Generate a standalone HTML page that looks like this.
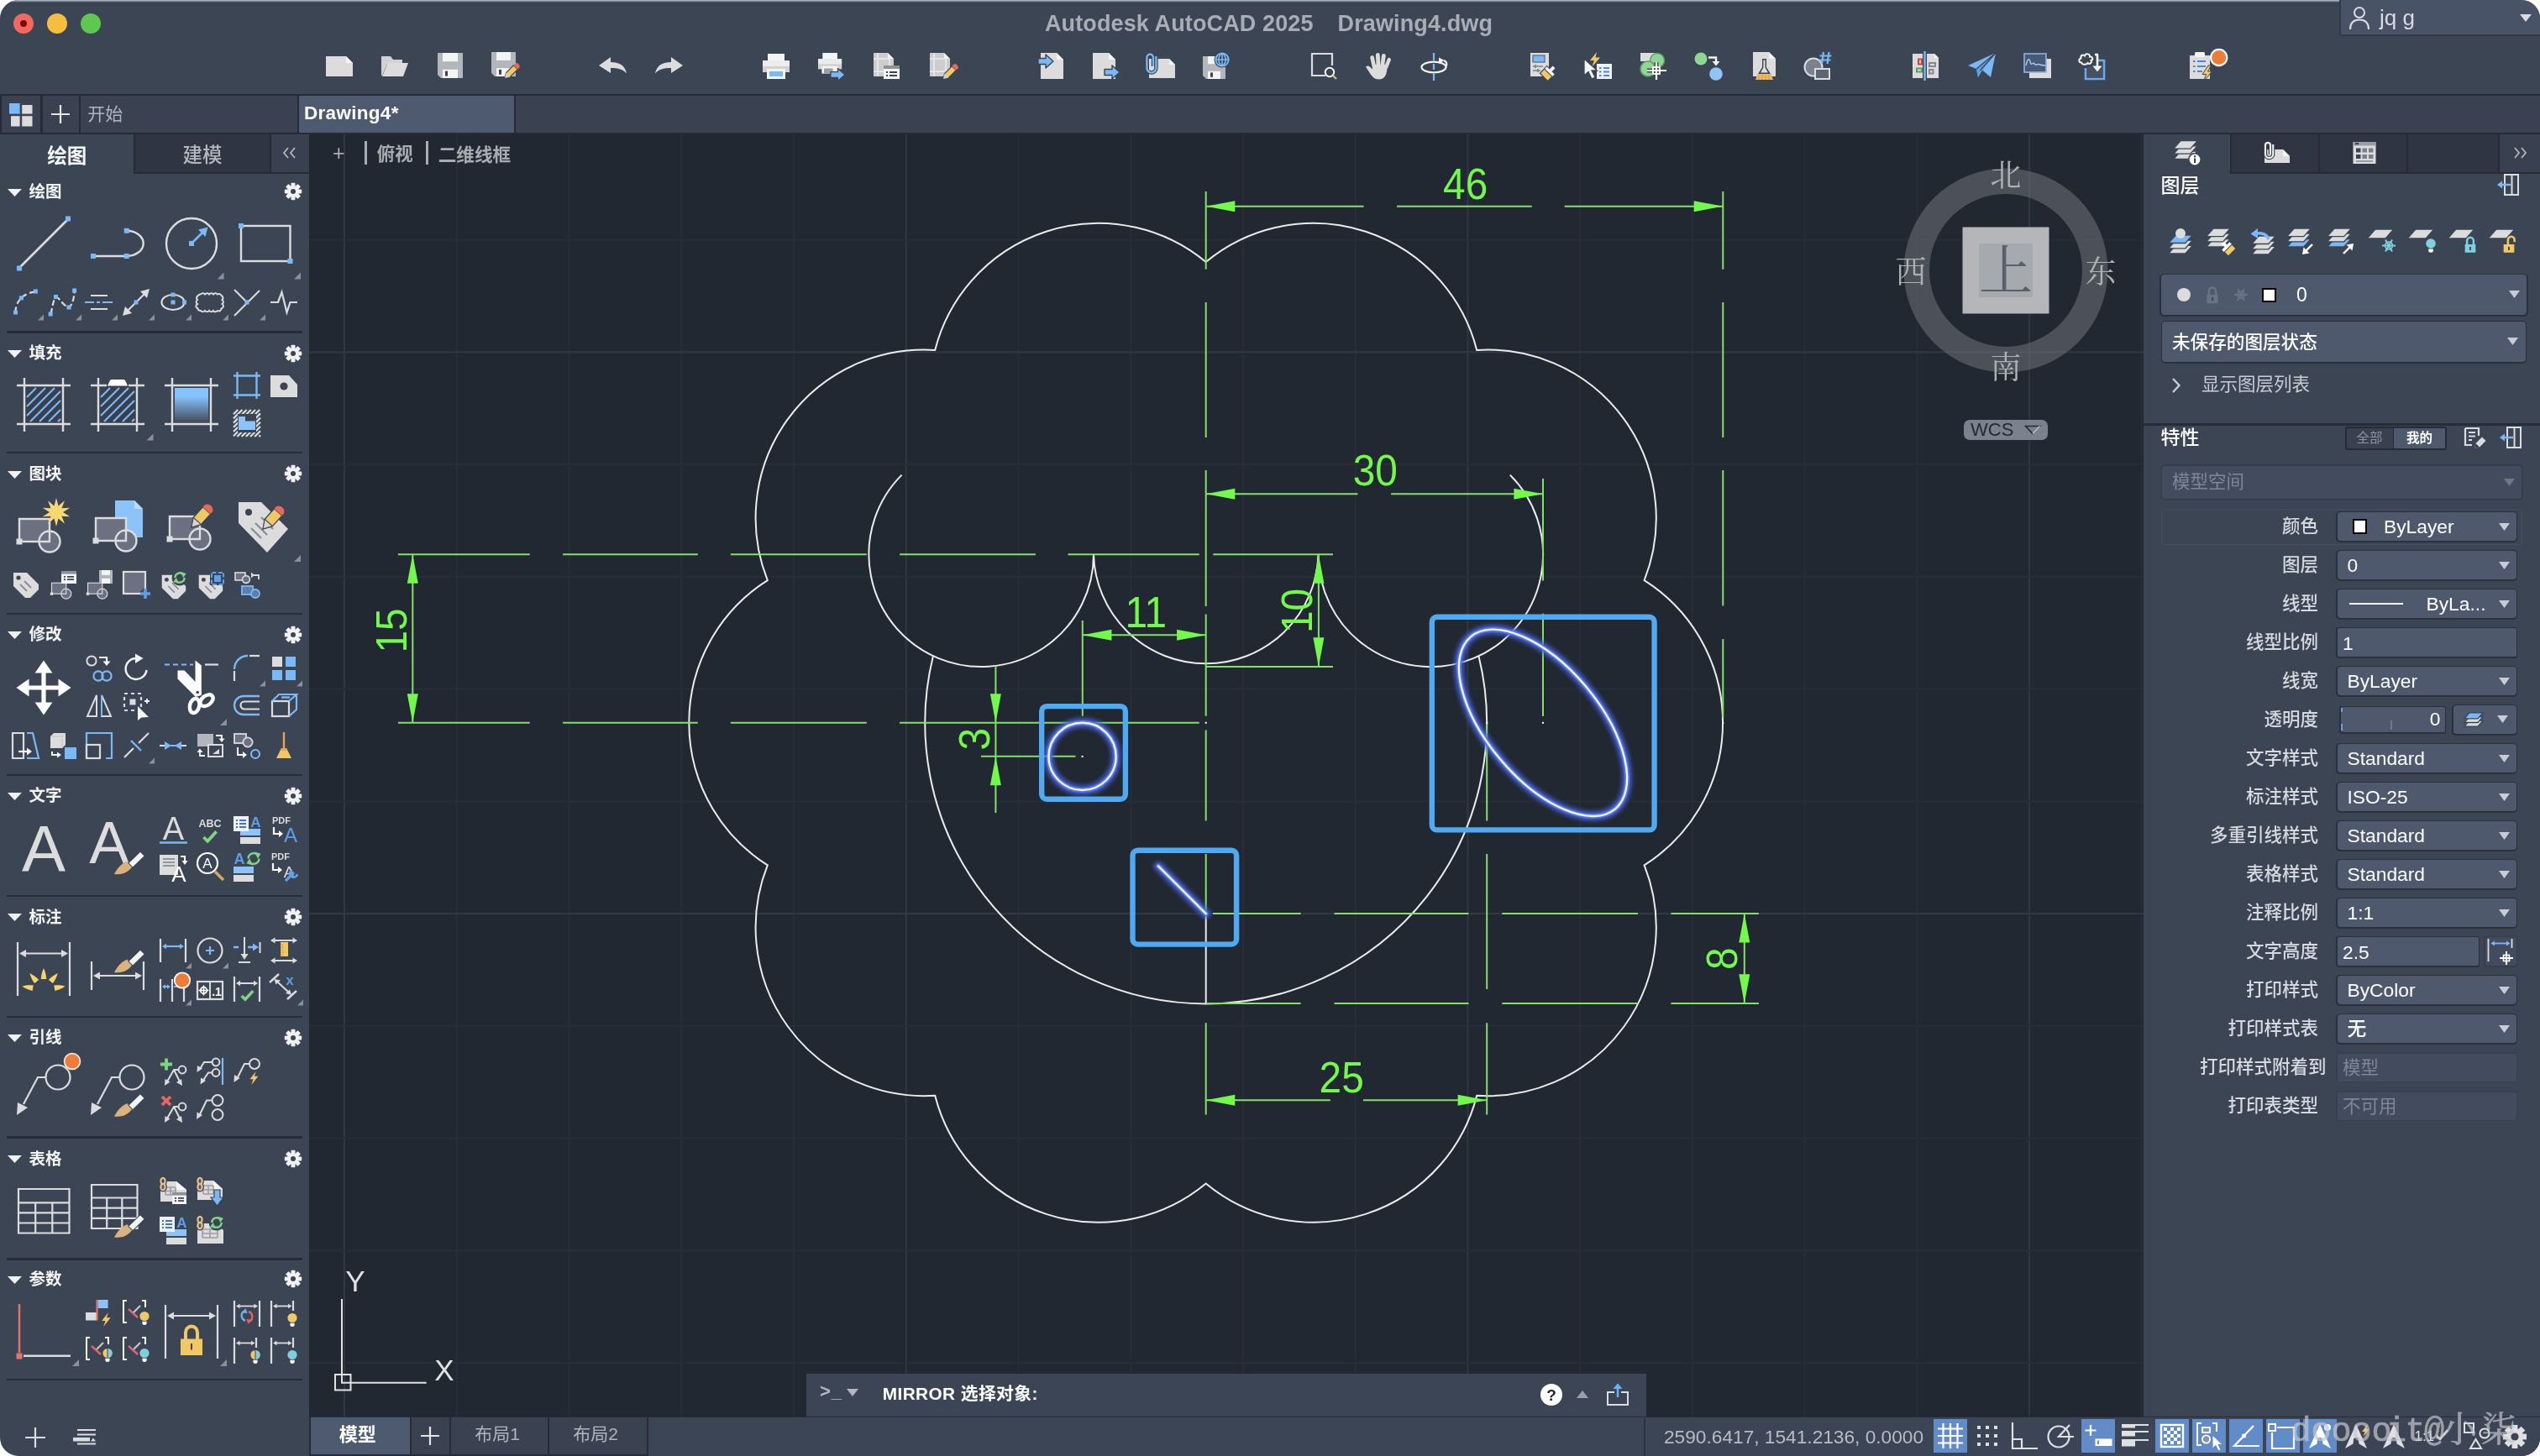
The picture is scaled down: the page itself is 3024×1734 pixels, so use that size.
<!DOCTYPE html>
<html lang="zh"><head><meta charset="utf-8"><title>Autodesk AutoCAD 2025 - Drawing4.dwg</title>
<style>
*{box-sizing:border-box;margin:0;padding:0}
html,body{width:3024px;height:1734px;background:#fff;overflow:hidden}
body{font-family:"Liberation Sans","Noto Sans CJK SC",sans-serif;color:#e6e8ec}
#win{position:absolute;left:0;top:0;width:3024px;height:1734px;background:#3c4554;border-radius:22px;overflow:hidden;will-change:transform}
.abs{position:absolute}
svg{position:absolute;overflow:visible}
.t{position:absolute;white-space:nowrap;line-height:1}
</style></head><body>
<div id="win">
<div class="abs" id="canvas" style="left:368px;top:160px;width:2184px;height:1527px;background:#222831;overflow:hidden">
<div class="abs" style="left:-368px;top:-160px;width:3024px;height:1734px">
<svg width="3024" height="1734" viewBox="0 0 3024 1734" style="left:0;top:0">
<defs><filter id="glow" x="-20%" y="-20%" width="140%" height="140%"><feGaussianBlur stdDeviation="2.6"/></filter></defs>
<rect x="409" y="160" width="2" height="1527" fill="#313845"/>
<rect x="542.7" y="160" width="2" height="1527" fill="#272e38"/>
<rect x="676.5" y="160" width="2" height="1527" fill="#272e38"/>
<rect x="810.2" y="160" width="2" height="1527" fill="#272e38"/>
<rect x="944" y="160" width="2" height="1527" fill="#272e38"/>
<rect x="1077.7" y="160" width="2" height="1527" fill="#313845"/>
<rect x="1211.4" y="160" width="2" height="1527" fill="#272e38"/>
<rect x="1345.2" y="160" width="2" height="1527" fill="#272e38"/>
<rect x="1478.9" y="160" width="2" height="1527" fill="#272e38"/>
<rect x="1612.7" y="160" width="2" height="1527" fill="#272e38"/>
<rect x="1746.4" y="160" width="2" height="1527" fill="#313845"/>
<rect x="1880.1" y="160" width="2" height="1527" fill="#272e38"/>
<rect x="2013.9" y="160" width="2" height="1527" fill="#272e38"/>
<rect x="2147.6" y="160" width="2" height="1527" fill="#272e38"/>
<rect x="2281.4" y="160" width="2" height="1527" fill="#272e38"/>
<rect x="2415.1" y="160" width="2" height="1527" fill="#313845"/>
<rect x="2548.8" y="160" width="2" height="1527" fill="#272e38"/>
<rect x="368" y="284.7" width="2184" height="2" fill="#272e38"/>
<rect x="368" y="418.4" width="2184" height="2" fill="#313845"/>
<rect x="368" y="552.1" width="2184" height="2" fill="#272e38"/>
<rect x="368" y="685.9" width="2184" height="2" fill="#272e38"/>
<rect x="368" y="819.6" width="2184" height="2" fill="#272e38"/>
<rect x="368" y="953.4" width="2184" height="2" fill="#272e38"/>
<rect x="368" y="1087.1" width="2184" height="2" fill="#313845"/>
<rect x="368" y="1220.8" width="2184" height="2" fill="#272e38"/>
<rect x="368" y="1354.6" width="2184" height="2" fill="#272e38"/>
<rect x="368" y="1488.3" width="2184" height="2" fill="#272e38"/>
<rect x="368" y="1622.1" width="2184" height="2" fill="#272e38"/>
<path d="M1957.6 1030.4A200.6 200.6 0 0 0 1957.6 691.2A200.6 200.6 0 0 0 1758.2 416.9A200.6 200.6 0 0 0 1435.7 312.1A200.6 200.6 0 0 0 1113.2 416.9A200.6 200.6 0 0 0 913.8 691.2A200.6 200.6 0 0 0 913.8 1030.4A200.6 200.6 0 0 0 1113.2 1304.7A200.6 200.6 0 0 0 1435.7 1409.5A200.6 200.6 0 0 0 1758.2 1304.7A200.6 200.6 0 0 0 1957.6 1030.4ZM1111 781.1A334.4 334.4 0 1 0 1760.4 781.1M1073.6 565.6A133.8 133.8 0 1 0 1302 660.2M1302 660.2A133.8 133.8 0 0 0 1569.5 660.2M1569.5 660.2A133.8 133.8 0 1 0 1797.8 565.6M1435.7 1088.2L1435.7 1195.2" fill="none" stroke="#ececec" stroke-width="2"/>
<path d="M473.9 660.2H630.7M670.1 660.2H830.8M869.9 660.2H1031.7M1071.1 660.2H1232.9M1271.5 660.2H1427.7M1444.3 660.2H1587M473.9 860.8H630.7M670.1 860.8H830.8M869.9 860.8H1031.7M1071.1 860.8H1427.7M1435.7 228V320.8M1435.7 360.1V521M1435.7 560V722M1435.7 731.5V852.8M1435.7 869.5V977.6M1435.7 1017V1087.5M1435.7 1218.3V1327.4M2051.3 228V320.8M2051.3 360.1V521M2051.3 560V721.6M2051.3 760.9V854.3M1837 570V691.6M1837 730.7V852.9M1435.7 245.7H1623.5M1663 245.7H1823.7M1862.7 245.7H2051.3M1435.7 588.3H1616.4M1656.1 588.3H1837.2M1288.8 739V852.8M1288.8 756.3H1435.7M1569.9 660.2V793.9M1435.7 793.9H1587M491.3 660.2V860.8M1185.4 793V968M1168 900.7H1280.5M2076.8 1087.9V1194.9M1443.9 1087.9H1548.7M1588.5 1087.9H1748.5M1788.3 1087.9H1950M1989.4 1087.9H2093.9M1435.9 1194.9H1548.7M1588.5 1194.9H1748.5M1788.3 1194.9H1950M1989.4 1194.9H2093.9M1770.2 862.5V977.4M1770.2 1017V1178M1770.2 1218.3V1327.4M1435.9 1310.3H1583.8M1623 1310.3H1770.2" fill="none" stroke="#84e069" stroke-width="2"/>
<path d="M1435.7 245.7L1470.3 252.2L1470.3 239.2ZM2051.3 245.7L2016.7 239.2L2016.7 252.2ZM1435.7 588.3L1470.3 594.8L1470.3 581.8ZM1837 588.3L1802.4 581.8L1802.4 594.8ZM1288.8 756.3L1323.4 762.8L1323.4 749.8ZM1435.7 756.3L1401.1 749.8L1401.1 762.8ZM1569.9 660.2L1563.4 694.8L1576.4 694.8ZM1569.9 793.9L1576.4 759.3L1563.4 759.3ZM491.3 660.2L484.8 694.8L497.8 694.8ZM491.3 860.8L497.8 826.2L484.8 826.2ZM1185.4 860.8L1191.9 826.2L1178.9 826.2ZM1185.4 900.7L1178.9 935.3L1191.9 935.3ZM2076.8 1087.9L2070.3 1122.5L2083.3 1122.5ZM2076.8 1194.9L2083.3 1160.3L2070.3 1160.3ZM1435.7 1310.3L1470.3 1316.8L1470.3 1303.8ZM1770.2 1310.3L1735.6 1303.8L1735.6 1316.8Z" fill="#73f84c"/>
<text transform="translate(1744.7 237) scale(.93 1)" font-size="51.4" text-anchor="middle" fill="#73f84c" font-family="Liberation Sans, sans-serif">46</text>
<text transform="translate(1637.3 578) scale(.93 1)" font-size="51.4" text-anchor="middle" fill="#73f84c" font-family="Liberation Sans, sans-serif">30</text>
<text transform="translate(1364.3 747) scale(.93 1)" font-size="51.4" text-anchor="middle" fill="#73f84c" font-family="Liberation Sans, sans-serif">11</text>
<text transform="translate(1597.2 1300.5) scale(.93 1)" font-size="51.4" text-anchor="middle" fill="#73f84c" font-family="Liberation Sans, sans-serif">25</text>
<text transform="translate(466.2 750.9) rotate(-90) translate(0 18.2) scale(.93 1)" font-size="51.4" text-anchor="middle" fill="#73f84c" font-family="Liberation Sans, sans-serif">15</text>
<text transform="translate(1543.5 727.4) rotate(-90) translate(0 18.2) scale(.93 1)" font-size="51.4" text-anchor="middle" fill="#73f84c" font-family="Liberation Sans, sans-serif">10</text>
<text transform="translate(1159.5 880.3) rotate(-90) translate(0 18.2) scale(.93 1)" font-size="51.4" text-anchor="middle" fill="#73f84c" font-family="Liberation Sans, sans-serif">3</text>
<text transform="translate(2049.7 1141.6) rotate(-90) translate(0 18.2) scale(.93 1)" font-size="51.4" text-anchor="middle" fill="#73f84c" font-family="Liberation Sans, sans-serif">8</text>
<g fill="none" stroke="#4464e0" stroke-width="11" opacity=".9" filter="url(#glow)" stroke-linecap="round"><ellipse cx="1837" cy="860.8" rx="133.8" ry="66.9" transform="rotate(50 1837 860.8)"/><circle cx="1288.6" cy="900.9" r="40.1"/><path d="M1435.7 1088.2L1379 1031.4"/></g>
<g fill="none" stroke="#5d7cec" stroke-width="6" opacity=".85" stroke-linecap="round"><ellipse cx="1837" cy="860.8" rx="133.8" ry="66.9" transform="rotate(50 1837 860.8)"/><circle cx="1288.6" cy="900.9" r="40.1"/><path d="M1435.7 1088.2L1379 1031.4"/></g>
<g fill="none" stroke="#f4f6ff" stroke-width="2.4" stroke-linecap="round"><ellipse cx="1837" cy="860.8" rx="133.8" ry="66.9" transform="rotate(50 1837 860.8)"/><circle cx="1288.6" cy="900.9" r="40.1"/><path d="M1435.7 1088.2L1379 1031.4"/></g>
<rect x="1240.2" y="841.1" width="99.7" height="110.7" rx="6" ry="6" fill="none" stroke="#4fa9f3" stroke-width="6.4"/>
<rect x="1704.8" y="734.7" width="264.8" height="253.7" rx="6" ry="6" fill="none" stroke="#4fa9f3" stroke-width="6.4"/>
<rect x="1348.5" y="1012.7" width="123.6" height="111.9" rx="6" ry="6" fill="none" stroke="#4fa9f3" stroke-width="6.4"/>
<rect x="1434.7" y="859.8" width="2" height="2" fill="#fff"/>
<rect x="1287.6" y="899.9" width="2" height="2" fill="#fff"/>
<rect x="1836" y="859.8" width="2" height="2" fill="#fff"/>
<rect x="1769.2" y="859.8" width="2" height="2" fill="#fff"/>
<rect x="2050.3" y="859.8" width="2" height="2" fill="#fff"/>
</svg>
<div class="t" style="left:396px;top:170px;font-size:25px;color:#a9acb2">+</div>
<div class="abs" style="left:434px;top:168px;width:3px;height:28px;background:#a9acb2"></div>
<div class="t" style="left:448.8px;top:173.5px;font-size:21.4px;color:#a9acb2;font-weight:bold">俯视</div>
<div class="abs" style="left:507px;top:168px;width:3px;height:28px;background:#a9acb2"></div>
<div class="t" style="left:521.7px;top:173.5px;font-size:21.6px;color:#a9acb2;font-weight:bold">二维线框</div>
<svg width="300" height="300" viewBox="-150 -150 300 300" style="left:2238px;top:172px"><circle r="106.2" fill="none" stroke="#7f848e" stroke-opacity=".44" stroke-width="30.5"/><rect x="-51.5" y="-51.5" width="103" height="103" fill="#b4b6b9"/><rect x="-32" y="-32" width="64" height="64" fill="#a6a9ad"/><g font-family="Noto Serif CJK SC, serif" text-anchor="middle"><text x="0" y="23" font-size="64" fill="#5a606b">上</text><g font-size="37" fill="#aeb0b3"><text x="0" y="-100">北</text><text x="0" y="129">南</text><text x="-113" y="15">西</text><text x="113" y="15">东</text></g></g></svg>
<div class="abs" style="left:2338px;top:500px;width:100px;height:24px;border-radius:7px;background:#7a828d"></div>
<div class="t" style="left:2346px;top:501px;font-size:22px;color:#232a34">WCS</div>
<svg width="20" height="12" viewBox="0 0 20 12" style="left:2410px;top:506px"><path d="M1.5 1.5H18.5L10 10.5Z" fill="none" stroke="#232a34" stroke-width="1.6"/><path d="M10 10.5L18.5 1.5" stroke="#c9ced6" stroke-width="1.6"/></svg>
<svg width="3024" height="1734" viewBox="0 0 3024 1734" style="left:0;top:0"><g fill="none" stroke="#e2e2e2" stroke-width="2"><rect x="399" y="1637" width="18.5" height="18.5"/><path d="M407 1547V1646.7H507.7"/></g><g font-family="Liberation Sans, sans-serif" fill="#e2e2e2" font-size="35" text-anchor="middle"><text x="423" y="1538">Y</text><text x="529" y="1644">X</text></g></svg>
<div class="abs" style="left:960px;top:1636px;width:1000px;height:51px;background:#3c4555"></div>
<div class="t" style="left:976px;top:1646px;font-size:22px;color:#b4b7bd;font-weight:bold;letter-spacing:1px">&gt;_</div>
<svg width="14" height="10" viewBox="0 0 14 10" style="left:1008px;top:1654px"><path d="M0 0H14L7 9Z" fill="#b4b7bd"/></svg>
<div class="t" style="left:1050.8px;top:1650px;font-size:20.8px;color:#fff;font-weight:bold;letter-spacing:.4px">MIRROR 选择对象:</div>
<svg width="28" height="28" viewBox="0 0 28 28" style="left:1833px;top:1647px"><circle cx="14" cy="14" r="13" fill="#fff"/><text x="14" y="21" font-size="19" font-weight="bold" text-anchor="middle" fill="#222831" font-family="Liberation Sans, sans-serif">?</text></svg>
<svg width="14" height="10" viewBox="0 0 14 10" style="left:1877px;top:1656px"><path d="M0 9H14L7 0Z" fill="#9a9fa8"/></svg>
<svg width="28" height="30" viewBox="0 0 28 30" style="left:1912px;top:1646px"><g fill="none" stroke="#dcdde0" stroke-width="2"><path d="M10 12H2V27H26V12H18"/><path d="M10 12V27M18 12V27" stroke-width="0"/><path d="M8 12V26M20 12V26" stroke-width="0"/></g><path d="M14 18V4" stroke="#6db3f2" stroke-width="2.4"/><path d="M8.5 8L14 1.5L19.5 8Z" fill="#6db3f2"/></svg>
</div></div>
<div class="abs" style="left:0;top:0;width:3024px;height:3px;background:linear-gradient(#aab3bf 0,#a4adb9 30%,#5c6572 68%,#3a434f 100%)"></div>
<svg width="26" height="26" viewBox="0 0 26 26" style="left:15px;top:15px"><circle cx="13" cy="13" r="12" fill="#f4695e"/><circle cx="13" cy="13" r="4" fill="#7a0d0a"/></svg>
<svg width="26" height="26" viewBox="0 0 26 26" style="left:55px;top:15px"><circle cx="13" cy="13" r="12" fill="#f6bd3f"/></svg>
<svg width="26" height="26" viewBox="0 0 26 26" style="left:95px;top:15px"><circle cx="13" cy="13" r="12" fill="#5cc84f"/></svg>
<div class="t" style="left:1244px;top:14.5px;font-size:27px;font-weight:bold;color:#a9adb6;letter-spacing:.12px">Autodesk AutoCAD 2025<span style="display:inline-block;width:29px"></span>Drawing4.dwg</div>
<div class="abs" style="left:2785px;top:0;width:239px;height:43px;background:#495367;border-bottom-left-radius:3px;border-left:2px solid #323947;border-bottom:2px solid #323947"></div>
<svg width="28" height="32" viewBox="0 0 28 32" style="left:2795px;top:6px"><circle cx="14" cy="9" r="6" fill="none" stroke="#d9dbe0" stroke-width="2"/><path d="M3 29C3 20 8 17.5 14 17.5C20 17.5 25 20 25 29" fill="none" stroke="#d9dbe0" stroke-width="2"/></svg>
<div class="t" style="left:2833px;top:8px;font-size:26px;color:#d9dbe0">jq g</div>
<svg width="14" height="10" viewBox="0 0 14 10" style="left:3000px;top:17px"><path d="M0 0H14L7 9Z" fill="#d9dbe0"/></svg>
<svg width="40" height="40" viewBox="0 0 40 40" style="left:384.0px;top:59.0px"><path d="M4 8H28L36 16V32H4Z" fill="#dcdcdc"/><path d="M28 8V16H36Z" fill="#f4f4f4"/></svg>
<svg width="40" height="40" viewBox="0 0 40 40" style="left:449.5px;top:59.0px"><path d="M4 8H15L18 12H29V17H11L5 31H4Z" fill="#d2d2d2"/><path d="M11.5 16H36L30 32H5Z" fill="#dcdcdc"/></svg>
<svg width="40" height="40" viewBox="0 0 40 40" style="left:516.0px;top:59.0px"><path d="M5 4H35V34H9L5 30Z" fill="#b3b6bb"/><rect x="11" y="4" width="18" height="10.2" fill="#f4f4f4"/><rect x="11" y="23.8" width="18" height="10.2" fill="#f4f4f4"/><rect x="14" y="25.6" width="3" height="6.0" fill="#3c4454"/></svg>
<svg width="40" height="40" viewBox="0 0 40 40" style="left:581.6px;top:59.0px"><path d="M3 3H32V32H7L3 28Z" fill="#b3b6bb"/><rect x="9" y="3" width="17" height="9.9" fill="#f4f4f4"/><rect x="9" y="22.1" width="17" height="9.9" fill="#f4f4f4"/><rect x="12" y="23.9" width="3" height="5.8" fill="#3c4454"/><g transform="translate(19 34) rotate(-45) scale(0.95)"><path d="M0 0L6 -3.6H19V3.6H6Z" fill="#f2c865" stroke="#3c4454" stroke-width="1.2"/><path d="M0 0L6 -3.6V3.6Z" fill="#cfcfcf"/><path d="M19 -3.6H22A2.6 3.6 0 0 1 22 3.6H19Z" fill="#e8685a"/></g></svg>
<svg width="40" height="40" viewBox="0 0 40 40" style="left:710.2px;top:59.0px"><path d="M3 19L17 9V15C27 15 34 18.5 36 28.5C32 23.5 26 22 17 22V28Z" fill="#dcdcdc"/></svg>
<svg width="40" height="40" viewBox="0 0 40 40" style="left:775.8px;top:59.0px"><path transform="translate(40 0) scale(-1 1)" d="M3 19L17 9V15C27 15 34 18.5 36 28.5C32 23.5 26 22 17 22V28Z" fill="#dcdcdc"/></svg>
<svg width="40" height="40" viewBox="0 0 40 40" style="left:904.0px;top:59.0px"><g transform="translate(4 5) scale(1.0)"><rect x="6" y="0" width="20" height="9" fill="#f4f4f4"/><rect x="0" y="8" width="32" height="8" fill="#ececec"/><rect x="0" y="15" width="32" height="7" fill="#d2d2d2"/><rect x="5" y="18" width="22" height="12" fill="#f4f4f4"/><rect x="8" y="21" width="16" height="6" fill="#7ab9f5"/></g></svg>
<svg width="40" height="40" viewBox="0 0 40 40" style="left:969.6px;top:59.0px"><g transform="translate(4 4) scale(.88)"><rect x="6" y="0" width="20" height="9" fill="#f4f4f4"/><rect x="0" y="8" width="32" height="8" fill="#ececec"/><rect x="0" y="15" width="32" height="7" fill="#d2d2d2"/><rect x="5" y="18" width="22" height="10" fill="#f4f4f4"/><rect x="8" y="21" width="12" height="7" fill="#9a9da3"/></g><path transform="translate(36 30) scale(0.95)" d="M0 0L-9 -8V-3.5H-18V3.5H-9V8Z" fill="#7ab9f5" stroke="#3c4454" stroke-width="1.4" stroke-linejoin="round"/></svg>
<svg width="40" height="40" viewBox="0 0 40 40" style="left:1035.2px;top:59.0px"><path d="M5 4H22L29 11V32H5Z" fill="#cdcdcd"/><path d="M22 4V11H29Z" fill="#f4f4f4"/><path d="M10 4V32M5 11H22M5 26H29M24 11V32" stroke="#e6e6e6" stroke-width="2" fill="none"/><rect x="17" y="19" width="19" height="16" fill="#f4f4f4"/><rect x="17" y="19" width="19" height="4" fill="#8e9197"/><path d="M20 27H22M24 27H33M20 31H22M24 31H33" stroke="#3c4454" stroke-width="2"/></svg>
<svg width="40" height="40" viewBox="0 0 40 40" style="left:1101.5px;top:59.0px"><path d="M5 4H22L29 11V32H5Z" fill="#cdcdcd"/><path d="M22 4V11H29Z" fill="#f4f4f4"/><path d="M10 4V32M5 11H22M5 26H29M24 11V32" stroke="#e6e6e6" stroke-width="2" fill="none"/><g transform="translate(21 35) rotate(-45) scale(0.95)"><path d="M0 0L6 -3.6H19V3.6H6Z" fill="#f2c865" stroke="#3c4454" stroke-width="1.2"/><path d="M0 0L6 -3.6V3.6Z" fill="#cfcfcf"/><path d="M19 -3.6H22A2.6 3.6 0 0 1 22 3.6H19Z" fill="#e8685a"/></g></svg>
<svg width="40" height="40" viewBox="0 0 40 40" style="left:1230.0px;top:59.0px"><path d="M9 4H28L36 12V35H9Z" fill="#dcdcdc"/><path d="M28 4V12H36Z" fill="#f4f4f4"/><path transform="translate(24 14) scale(1.0)" d="M0 0L-9 -8V-3.5H-18V3.5H-9V8Z" fill="#7ab9f5" stroke="#3c4454" stroke-width="1.4" stroke-linejoin="round"/></svg>
<svg width="40" height="40" viewBox="0 0 40 40" style="left:1295.5px;top:59.0px"><path d="M5 4H24L32 12V35H5Z" fill="#dcdcdc"/><path d="M24 4V12H32Z" fill="#f4f4f4"/><path transform="translate(37 27) scale(1.0)" d="M0 0L-9 -8V-3.5H-18V3.5H-9V8Z" fill="#7ab9f5" stroke="#3c4454" stroke-width="1.4" stroke-linejoin="round"/></svg>
<svg width="40" height="40" viewBox="0 0 40 40" style="left:1361.5px;top:59.0px"><path d="M6 11H30L37 18V34H6Z" fill="#dcdcdc"/><path d="M30 11V18H37Z" fill="#f4f4f4"/><path d="M11 20V9.5A3.8 3.8 0 0 0 3.4 9.5V22A5.5 5.5 0 0 0 14.4 22V8" fill="none" stroke="#3c4454" stroke-width="4.5"/><path d="M11 20V9.5A3.8 3.8 0 0 0 3.4 9.5V22A5.5 5.5 0 0 0 14.4 22V8" fill="none" stroke="#7ab9f5" stroke-width="2.2"/></svg>
<svg width="40" height="40" viewBox="0 0 40 40" style="left:1427.5px;top:59.0px"><path d="M4 8H31V35H8L4 31Z" fill="#b3b6bb"/><rect x="10" y="8" width="15" height="9.2" fill="#f4f4f4"/><rect x="10" y="25.8" width="15" height="9.2" fill="#f4f4f4"/><rect x="13" y="27.4" width="3" height="5.4" fill="#3c4454"/><circle cx="27" cy="12" r="9.6" fill="#3c4454"/><circle cx="27" cy="12" r="7.6" fill="none" stroke="#7ab9f5" stroke-width="2"/><path d="M19.4 12H34.6M27 4.4V19.6M27 4.4C21.5 8 21.5 16 27 19.6M27 4.4C32.5 8 32.5 16 27 19.6" fill="none" stroke="#7ab9f5" stroke-width="1.6"/></svg>
<svg width="40" height="40" viewBox="0 0 40 40" style="left:1555.5px;top:59.0px"><path d="M22 31H6V5H30V19" fill="none" stroke="#dcdcdc" stroke-width="2.2"/><circle cx="27" cy="27" r="5.2" fill="#3c4454" stroke="#f4f4f4" stroke-width="2"/><path d="M31 31L35 35" stroke="#d8b880" stroke-width="2.4"/></svg>
<svg width="40" height="40" viewBox="0 0 40 40" style="left:1621.5px;top:59.0px"><g fill="#dcdcdc"><rect x="10.5" y="7" width="4.6" height="16" rx="2.3" transform="rotate(-12 12.8 15)"/><rect x="16.2" y="4" width="4.8" height="17" rx="2.4" transform="rotate(-3 18.6 12)"/><rect x="22.2" y="5" width="4.8" height="17" rx="2.4" transform="rotate(8 24.6 13)"/><rect x="28" y="9.5" width="4.4" height="14" rx="2.2" transform="rotate(22 30.2 16)"/><path d="M4 20.5C6 18.5 9 19.5 11.5 23.5L13 18H30L29 26C28 32 25 35.5 20 35.5C14 35.5 11.5 32 8.5 27.5Z"/></g></svg>
<svg width="40" height="40" viewBox="0 0 40 40" style="left:1688.0px;top:59.0px"><ellipse cx="19" cy="21" rx="14.5" ry="6.3" fill="none" stroke="#f4f4f4" stroke-width="2.2"/><path d="M25 9.5L31.5 13L25 16.8Z" fill="#f4f4f4"/><path d="M31 13C34 14.5 35 17 33.6 20" fill="none" stroke="#f4f4f4" stroke-width="2.2"/><rect x="24" y="15" width="10" height="4" fill="#3c4454" opacity="0"/><path d="M19 4V13M19 17V24M19 29V37" stroke="#7ab9f5" stroke-width="2.2"/></svg>
<svg width="40" height="40" viewBox="0 0 40 40" style="left:1816.6px;top:59.0px"><rect x="5" y="4" width="22" height="28" fill="#dcdcdc"/><rect x="8" y="7" width="14" height="8" fill="#7ab9f5" stroke="#6a7386" stroke-width="1.4"/><path d="M8 20H20M8 25H17M11 18V22M14 23V27" stroke="#7b7f88" stroke-width="1.6"/><g transform="translate(26 28) rotate(45)"><rect x="-6.5" y="-1" width="13" height="8" fill="#f2c865" stroke="#3c4454" stroke-width="1.2"/><rect x="-7" y="-5" width="14" height="4.5" fill="#f4f4f4" stroke="#3c4454" stroke-width="1"/><rect x="-2" y="-10" width="4" height="6" fill="#f4f4f4"/></g></svg>
<svg width="40" height="40" viewBox="0 0 40 40" style="left:1882.0px;top:59.0px"><path d="M19 3L11 13H16L13 21L23 9.5H17.5Z" fill="#f2c865"/><rect x="19" y="17" width="18" height="18" fill="#eef2f8"/><path d="M22 22H24.5M27 22H34M22 26.5H24.5M27 26.5H34M22 31H24.5M27 31H34" stroke="#4a87d8" stroke-width="2.2"/><path d="M4 11V31L9 26.5L13 35L17 33L13 25H19.5Z" fill="#f4f4f4" stroke="#3c4454" stroke-width="1.3"/></svg>
<svg width="40" height="40" viewBox="0 0 40 40" style="left:1948.0px;top:59.0px"><path d="M5 4H25V14H5Z" fill="#dcdcdc"/><circle cx="25" cy="13" r="8.5" fill="#8fd694" stroke="#5e9c68" stroke-width="1.5"/><circle cx="14" cy="23" r="9" fill="#8fd694" stroke="#5e9c68" stroke-width="1.5"/><path d="M24 15V36M13 25H36" stroke="#3c4454" stroke-width="5"/><path d="M24 15V36M13 25H36" stroke="#fff" stroke-width="2.2"/><rect x="20" y="21" width="8" height="8" fill="none" stroke="#fff" stroke-width="1.8"/></svg>
<svg width="40" height="40" viewBox="0 0 40 40" style="left:2014.0px;top:59.0px"><circle cx="11" cy="11" r="7.5" fill="#8fd694"/><circle cx="29" cy="29" r="7.8" fill="#8fc4f7"/><path d="M20 9.5H29V15" fill="none" stroke="#f4f4f4" stroke-width="2.4"/><path d="M24.5 14H33.5L29 19.5Z" fill="#f4f4f4"/></svg>
<svg width="40" height="40" viewBox="0 0 40 40" style="left:2079.6px;top:59.0px"><path d="M7 3H26L34 11V32H7Z" fill="#dcdcdc"/><path d="M26 3V11H34Z" fill="#f4f4f4"/><path d="M18 11H23V21L28.5 30H12.5L18 21Z" fill="#3c4454"/><path d="M19.4 12.5H21.6V21.5L25 27.5H16L19.4 21.5Z" fill="#dcdcdc"/><path d="M12.5 29H28.5L31 36H10Z" fill="#f0b85e"/><path d="M14 30.5V36M18 30.5V36M22 30.5V36M26 30.5V36" stroke="#d89a3e" stroke-width="1"/></svg>
<svg width="40" height="40" viewBox="0 0 40 40" style="left:2145.3px;top:59.0px"><circle cx="14" cy="21" r="10.5" fill="#7c818c" stroke="#dcdcdc" stroke-width="2"/><rect x="16" y="23" width="17" height="12" fill="#5d6473" stroke="#dcdcdc" stroke-width="2"/><path d="M26 3L24 17M32.5 3L30.5 17M21.5 7.5H35.5M20.5 12.5H34.5" stroke="#7ab9f5" stroke-width="2.2" fill="none"/></svg>
<svg width="40" height="40" viewBox="0 0 40 40" style="left:2274.2px;top:59.0px"><rect x="3" y="5" width="12" height="29" fill="#dcdcdc"/><path d="M20 5H29L34 10V34H20Z" fill="#dcdcdc"/><path d="M29 5V10H34Z" fill="#f4f4f4"/><rect x="16.3" y="2" width="2.4" height="35" fill="#7ab9f5"/><rect x="10" y="11.5" width="4" height="6" fill="none" stroke="#d8403a" stroke-width="2"/><rect x="8" y="22.5" width="6" height="4" fill="none" stroke="#53a653" stroke-width="2"/><rect x="23" y="16" width="7" height="4" fill="none" stroke="#85888e" stroke-width="2"/><rect x="23" y="24" width="4.5" height="4.5" fill="none" stroke="#85888e" stroke-width="2"/></svg>
<svg width="40" height="40" viewBox="0 0 40 40" style="left:2340.4px;top:59.0px"><path d="M3 19L36 4L30 33L20 24.5L15 33L13 23Z" fill="#7ab9f5"/><path d="M13 23L36 4L20 24.5L15 33Z" fill="#5e9fe0"/><path d="M13 23L36 4L17.5 25" fill="none" stroke="#3c4454" stroke-width="1.2"/></svg>
<svg width="40" height="40" viewBox="0 0 40 40" style="left:2406.0px;top:59.0px"><rect x="10" y="11" width="26" height="23" fill="#dcdcdc"/><rect x="4" y="5" width="26" height="22" fill="#485a78" stroke="#8db4e4" stroke-width="1.6"/><path d="M6 19C8 10 10 10 11.5 16C13 20 14 14 16 17C18 20 20 16 23 18C25 19 27 18.5 29 19" fill="none" stroke="#a9cdf4" stroke-width="1.4"/></svg>
<svg width="40" height="40" viewBox="0 0 40 40" style="left:2472.3px;top:59.0px"><path d="M11 22V35H33V13H26" fill="none" stroke="#6aa9ec" stroke-width="2.6"/><rect x="13" y="20" width="18" height="13" fill="#475062"/><path d="M25 6V24" stroke="#f4f4f4" stroke-width="2.6"/><path d="M19.5 19.5L25 26.5L30.5 19.5Z" fill="#f4f4f4"/><path d="M22 6H26" stroke="#f4f4f4" stroke-width="2.6"/><path d="M6 15.5C2.5 15.5 2.5 11 5.5 10.5C4.5 6.5 8.5 5.5 10 7.5C11 4 16.5 5 16 8.5C19.5 8 20.5 12 17.5 13C19 16 15.5 18 13.5 16C12 18.5 7 18.5 6 15.5Z" fill="#3c4454" stroke="#f4f4f4" stroke-width="2"/></svg>
<svg width="40" height="40" viewBox="0 0 40 40" style="left:2605.3px;top:59.0px"><rect x="2" y="7" width="24" height="28" fill="#dcdcdc"/><rect x="8" y="3" width="12" height="6" rx="1.5" fill="#f4f4f4"/><path d="M6 14H8.5M11 14H21M6 20H8.5M11 20H21M6 26H8.5M11 26H17" stroke="#4a87d8" stroke-width="2.2"/><path d="M24 19L17 29.5H21.5L18.5 38L28.5 26H23.5L27.5 19Z" fill="#f2c865" stroke="#3c4454" stroke-width="1"/><circle cx="36.7" cy="9.5" r="9.6" fill="#ee7b36" stroke="#fff" stroke-width="2.2"/></svg>
<div class="abs" style="left:0;top:112px;width:3024px;height:48px;background:#262c37"></div>
<div class="abs" style="left:0;top:114px;width:3024px;height:44px;background:#3a4252"></div>
<div class="abs" style="left:0px;top:114px;width:50px;height:44px;background:#262c37"></div>
<div class="abs" style="left:2px;top:114px;width:46px;height:44px;background:#3a4252"></div>
<div class="abs" style="left:48.5px;top:114px;width:47.8px;height:44px;background:#262c37"></div>
<div class="abs" style="left:50.5px;top:114px;width:43.8px;height:44px;background:#3a4252"></div>
<div class="abs" style="left:94px;top:114px;width:262.3px;height:44px;background:#262c37"></div>
<div class="abs" style="left:96px;top:114px;width:258.3px;height:44px;background:#3a4252"></div>
<div class="abs" style="left:354.3px;top:114px;width:259.99999999999994px;height:44px;background:#262c37"></div>
<div class="abs" style="left:356.3px;top:114px;width:255.99999999999994px;height:44px;background:#4e5a70"></div>
<svg width="28" height="28" viewBox="0 0 28 28" style="left:10.5px;top:122.5px"><rect x="0" y="0" width="12.6" height="12.6" fill="#7ab9f5"/><rect x="15.2" y="2" width="12.3" height="10.6" fill="#dcdcdc"/><rect x="2" y="15.2" width="10.6" height="12.3" fill="#dcdcdc"/><rect x="15.2" y="15.2" width="12.3" height="12.3" fill="#dcdcdc"/></svg>
<svg width="24" height="24" viewBox="0 0 24 24" style="left:60px;top:124px"><path d="M12 1V23M1 12H23" stroke="#e4e4e4" stroke-width="2.2"/></svg>
<div class="t" style="left:104.3px;top:125px;font-size:21px;color:#b1b4ba">开始</div>
<div class="t" style="left:362px;top:124px;font-size:22.5px;color:#fff;font-weight:bold;letter-spacing:.3px">Drawing4*</div>
<div class="abs" style="left:159px;top:158px;width:164px;height:49px;background:#262b35"></div>
<div class="abs" style="left:161px;top:160px;width:160px;height:45px;background:#2f3542"></div>
<div class="abs" style="left:321px;top:158px;width:47px;height:49px;background:#262b35"></div>
<div class="abs" style="left:323px;top:160px;width:45px;height:45px;background:#394150"></div>
<div class="t" style="left:56.3px;top:175px;font-size:23.5px;font-weight:bold;color:#f6f6f6">绘图</div>
<div class="t" style="left:217.5px;top:174px;font-size:23.5px;font-weight:500;color:#b4b7bd">建模</div>
<svg width="18" height="14" viewBox="0 0 18 14" style="left:336px;top:175px"><path d="M7 1L2 7L7 13M15 1L10 7L15 13" fill="none" stroke="#b4b7bd" stroke-width="1.8"/></svg>
<svg width="18" height="10" viewBox="0 0 18 10" style="left:8.5px;top:224.5px"><path d="M0 0H17L8.5 9Z" fill="#f2f2f2"/></svg><div class="t" style="left:34.5px;top:218.7px;font-size:19.5px;font-weight:bold;color:#f4f4f4">绘图</div><svg width="24" height="24" viewBox="-12.0 -12.0 24 24" style="left:336.5px;top:216.0px"><g fill="#f2f2f2"><rect x="-2.5" y="-10.2" width="5" height="20.4" rx="1" transform="rotate(0)"/><rect x="-2.5" y="-10.2" width="5" height="20.4" rx="1" transform="rotate(45)"/><rect x="-2.5" y="-10.2" width="5" height="20.4" rx="1" transform="rotate(90)"/><rect x="-2.5" y="-10.2" width="5" height="20.4" rx="1" transform="rotate(135)"/><circle r="6.8"/></g><circle r="3" fill="#3c4554"/></svg><svg width="76" height="76" viewBox="-38.0 -38.0 76 76" style="left:14.0px;top:252.0px"><path d="M-29 29L29 -29" stroke="#dcdcdc" stroke-width="2.6"/><rect x="-32.0" y="26.5" width="6" height="6" fill="#7ab9f5"/><rect x="26.0" y="-32.5" width="6" height="6" fill="#7ab9f5"/></svg><svg width="76" height="76" viewBox="-38.0 -38.0 76 76" style="left:102.0px;top:252.0px"><path d="M-29 15H10.7A20 15.1 0 0 0 10.7 -15.2" fill="none" stroke="#dcdcdc" stroke-width="2.4"/><rect x="-32.0" y="12.0" width="6" height="6" fill="#7ab9f5"/><rect x="7.7" y="12.0" width="6" height="6" fill="#7ab9f5"/><rect x="7.7" y="-18.2" width="6" height="6" fill="#7ab9f5"/></svg><svg width="76" height="76" viewBox="-38.0 -38.0 76 76" style="left:190.0px;top:252.0px"><circle r="30" fill="none" stroke="#dcdcdc" stroke-width="2.4"/><path d="M2 -2L13 -13" stroke="#7ab9f5" stroke-width="2.6"/><path d="M19.5 -19.5L8 -16.5L16.5 -8Z" fill="#7ab9f5"/><rect x="-3.0" y="-3.0" width="6" height="6" fill="#7ab9f5"/><path d="M38.5 42.5V34.5L30.5 42.5Z" fill="#8b9099"/></svg><svg width="76" height="76" viewBox="-38.0 -38.0 76 76" style="left:278.0px;top:252.0px"><rect x="-29" y="-21" width="58.5" height="42" fill="none" stroke="#dcdcdc" stroke-width="2.4"/><rect x="-32.0" y="-24.0" width="6" height="6" fill="#7ab9f5"/><rect x="26.5" y="18.0" width="6" height="6" fill="#7ab9f5"/><path d="M42 42.5V34.5L34 42.5Z" fill="#8b9099"/></svg><svg width="44" height="44" viewBox="-22.0 -22.0 44 44" style="left:7.6px;top:338.0px"><path d="M-11.5 11.5C-11.5 -2 -1 -11.5 12 -12.5" fill="none" stroke="#dcdcdc" stroke-width="2.2" stroke-dasharray="6 4"/><rect x="-14.0" y="9.5" width="5" height="5" fill="#7ab9f5"/><rect x="-7.1" y="-7.7" width="5" height="5" fill="#7ab9f5"/><rect x="9.9" y="-15.5" width="5" height="5" fill="#7ab9f5"/><path d="M22 21.5V14.5L15 21.5Z" fill="#8b9099"/></svg><svg width="44" height="44" viewBox="-22.0 -22.0 44 44" style="left:52.6px;top:338.0px"><path d="M-14.5 14C-12 2 -11 -4 -8.5 -6C-4 -6 -1 3 7 6.5C12 2 13 -6 14 -14" fill="none" stroke="#dcdcdc" stroke-width="2.2" stroke-dasharray="7 3"/><rect x="-17.3" y="11.5" width="5" height="5" fill="#7ab9f5"/><rect x="-11.0" y="-9.0" width="5" height="5" fill="#7ab9f5"/><rect x="4.5" y="3.5" width="5" height="5" fill="#7ab9f5"/><rect x="11.1" y="-16.5" width="5" height="5" fill="#7ab9f5"/><path d="M22 21.5V14.5L15 21.5Z" fill="#8b9099"/></svg><svg width="44" height="44" viewBox="-22.0 -22.0 44 44" style="left:96.0px;top:338.0px"><path d="M-10 -8H10M-10 8H10" stroke="#dcdcdc" stroke-width="2"/><path d="M-17 0H-6M-3 0H1M4 0H16" stroke="#7ab9f5" stroke-width="2"/><path d="M22 21.5V14.5L15 21.5Z" fill="#8b9099"/></svg><svg width="44" height="44" viewBox="-22.0 -22.0 44 44" style="left:140.0px;top:338.0px"><path d="M-10 10L10 -10" stroke="#dcdcdc" stroke-width="2.2"/><path d="M-16 16L-13 5L-5 13Z M16 -16L13 -5L5 -13Z" fill="#dcdcdc"/><rect x="-2.5" y="-2.5" width="5" height="5" fill="#7ab9f5"/><path d="M22 21.5V14.5L15 21.5Z" fill="#8b9099"/></svg><svg width="44" height="44" viewBox="-22.0 -22.0 44 44" style="left:183.6px;top:338.0px"><ellipse rx="13.5" ry="9" fill="none" stroke="#dcdcdc" stroke-width="2.2"/><rect x="-2.5" y="-2.5" width="5" height="5" fill="#7ab9f5"/><rect x="-2.5" y="-11.5" width="5" height="5" fill="#7ab9f5"/><rect x="11.0" y="-2.5" width="5" height="5" fill="#7ab9f5"/><path d="M22 21.5V14.5L15 21.5Z" fill="#8b9099"/></svg><svg width="44" height="44" viewBox="-22.0 -22.0 44 44" style="left:228.0px;top:338.0px"><path d="M-11 -9.5A3 3 0 0 1 -6 -9.5A3 3 0 0 1 -1 -9.5A3 3 0 0 1 4 -9.5A3 3 0 0 1 9 -9.5A3 3 0 0 1 13.5 -8A3 3 0 0 1 14.5 -3A3 3 0 0 1 14.5 2A3 3 0 0 1 13.5 7.5A3 3 0 0 1 9 10A3 3 0 0 1 4 10A3 3 0 0 1 -1 10A3 3 0 0 1 -6 10A3 3 0 0 1 -11 10A3 3 0 0 1 -14.5 7.5A3 3 0 0 1 -15 2A3 3 0 0 1 -15 -3A3 3 0 0 1 -14 -8A3 3 0 0 1 -11 -9.5" fill="none" stroke="#dcdcdc" stroke-width="2"/><path d="M22 21.5V14.5L15 21.5Z" fill="#8b9099"/></svg><svg width="44" height="44" viewBox="-22.0 -22.0 44 44" style="left:272.0px;top:338.0px"><path d="M-15 -15L0 0M15 -14L-15 16" stroke="#dcdcdc" stroke-width="2"/><rect x="-2.5" y="-2.5" width="5" height="5" fill="#7ab9f5"/><path d="M22 21.5V14.5L15 21.5Z" fill="#8b9099"/></svg><svg width="44" height="44" viewBox="-22.0 -22.0 44 44" style="left:316.0px;top:338.0px"><path d="M-16 0H-7L-2.5 -12L3.5 12L7.5 0H16" fill="none" stroke="#dcdcdc" stroke-width="2.2" stroke-linejoin="miter"/></svg><div class="abs" style="left:8px;top:394.0px;width:352px;height:2.5px;background:#272d38"></div>
<svg width="18" height="10" viewBox="0 0 18 10" style="left:8.5px;top:417.0px"><path d="M0 0H17L8.5 9Z" fill="#f2f2f2"/></svg><div class="t" style="left:34.5px;top:411.2px;font-size:19.5px;font-weight:bold;color:#f4f4f4">填充</div><svg width="24" height="24" viewBox="-12.0 -12.0 24 24" style="left:336.5px;top:408.5px"><g fill="#f2f2f2"><rect x="-2.5" y="-10.2" width="5" height="20.4" rx="1" transform="rotate(0)"/><rect x="-2.5" y="-10.2" width="5" height="20.4" rx="1" transform="rotate(45)"/><rect x="-2.5" y="-10.2" width="5" height="20.4" rx="1" transform="rotate(90)"/><rect x="-2.5" y="-10.2" width="5" height="20.4" rx="1" transform="rotate(135)"/><circle r="6.8"/></g><circle r="3" fill="#3c4554"/></svg><svg width="76" height="76" viewBox="-38.0 -38.0 76 76" style="left:14.0px;top:444.0px"><rect x="-21" y="-21" width="42" height="42" fill="#383f4d"/><path d="M-20.0 -9.0L-9.0 -20.0M-20.0 2.0L2.0 -20.0M-20.0 13.0L13.0 -20.0M-16.0 20.0L20.0 -16.0M-5.0 20.0L20.0 -5.0M6.0 20.0L20.0 6.0M17.0 20.0L20.0 17.0" stroke="#7ab9f5" stroke-width="2.2" fill="none"/><path d="M-23 -32V32M23 -32V32M-32 -23H32M-32 23H32" stroke="#dcdcdc" stroke-width="2.4" fill="none"/></svg><svg width="76" height="76" viewBox="-38.0 -38.0 76 76" style="left:102.0px;top:444.0px"><rect x="-21" y="-21" width="42" height="42" fill="#383f4d"/><path d="M-20.0 -9.0L-9.0 -20.0M-20.0 2.0L2.0 -20.0M-20.0 13.0L13.0 -20.0M-16.0 20.0L20.0 -16.0M-5.0 20.0L20.0 -5.0M6.0 20.0L20.0 6.0M17.0 20.0L20.0 17.0" stroke="#7ab9f5" stroke-width="2.2" fill="none"/><path d="M-23 -32V32M23 -32V32M-32 -23H32M-32 23H32" stroke="#dcdcdc" stroke-width="2.4" fill="none"/><rect x="-13" y="-25" width="26" height="4" fill="#3c4554"/><path d="M-12 -22.5H12L10 -27C9 -29.5 8 -30 6 -30H-6C-8 -30 -9 -29.5 -10 -27Z" fill="#fff"/><path d="M42.5 42.5V34.5L34.5 42.5Z" fill="#8b9099"/></svg><svg width="76" height="76" viewBox="-38.0 -38.0 76 76" style="left:190.0px;top:444.0px"><defs><linearGradient id="hg" x1="0" y1="0" x2="0" y2="1"><stop offset="0" stop-color="#86c2fb"/><stop offset=".25" stop-color="#86c2fb"/><stop offset="1" stop-color="#434959"/></linearGradient></defs><rect x="-20" y="-20" width="40" height="41" fill="url(#hg)"/><path d="M-23 -32V32M23 -32V32M-32 -23H32M-32 23H32" stroke="#dcdcdc" stroke-width="2.4" fill="none"/></svg><svg width="40" height="40" viewBox="-20.0 -20.0 40 40" style="left:274.0px;top:439.0px"><path d="M-11.5 -16V16M11.5 -16V16M-16 -11.5H16M-16 11.5H16" stroke="#7ab9f5" stroke-width="2.4" fill="none"/></svg><svg width="40" height="40" viewBox="-20.0 -20.0 40 40" style="left:318.0px;top:439.5px"><path d="M-16 -13H6L16 -2V13H-16Z" fill="#dcdcdc"/><circle cx="0" cy="0" r="4.6" fill="#3c4454"/></svg><svg width="40" height="40" viewBox="-20.0 -20.0 40 40" style="left:274.0px;top:484.0px"><rect x="-16" y="-16" width="32" height="32" fill="#3c4554"/><path d="M-16.0 -10.8L-10.8 -16.0M-16.0 -5.6L-5.6 -16.0M-16.0 -0.4L-0.4 -16.0M-16.0 4.8L4.8 -16.0M-16.0 10.0L10.0 -16.0M-16.0 15.2L15.2 -16.0M-11.6 16.0L16.0 -11.6M-6.4 16.0L16.0 -6.4M-1.2 16.0L16.0 -1.2M4.0 16.0L16.0 4.0M9.2 16.0L16.0 9.2M14.4 16.0L16.0 14.4" stroke="#dcdcdc" stroke-width="2.2" fill="none"/><rect x="-11" y="-11" width="22" height="22" fill="#3c4554"/><path d="M-10 -8H-2V-2.5H10V8H-10Z" fill="#8cc4fa"/></svg><div class="abs" style="left:8px;top:537.8px;width:352px;height:2.5px;background:#272d38"></div>
<svg width="18" height="10" viewBox="0 0 18 10" style="left:8.5px;top:560.5px"><path d="M0 0H17L8.5 9Z" fill="#f2f2f2"/></svg><div class="t" style="left:34.5px;top:554.7px;font-size:19.5px;font-weight:bold;color:#f4f4f4">图块</div><svg width="24" height="24" viewBox="-12.0 -12.0 24 24" style="left:336.5px;top:552.0px"><g fill="#f2f2f2"><rect x="-2.5" y="-10.2" width="5" height="20.4" rx="1" transform="rotate(0)"/><rect x="-2.5" y="-10.2" width="5" height="20.4" rx="1" transform="rotate(45)"/><rect x="-2.5" y="-10.2" width="5" height="20.4" rx="1" transform="rotate(90)"/><rect x="-2.5" y="-10.2" width="5" height="20.4" rx="1" transform="rotate(135)"/><circle r="6.8"/></g><circle r="3" fill="#3c4554"/></svg><svg width="80" height="80" viewBox="-40.0 -40.0 80 80" style="left:12.0px;top:586.0px"><g transform="translate(-3 4) scale(1.0)"><rect x="-26" y="-12" width="36" height="27" fill="#6b7180" stroke="#dcdcdc" stroke-width="2.4"/><circle cx="10" cy="15" r="12.5" fill="#6b7180" stroke="#dcdcdc" stroke-width="2.4"/><path d="M10 2.5V15H-2.5" fill="none" stroke="#dcdcdc" stroke-width="2.4"/><rect x="-29.5" y="11.5" width="7" height="7" fill="#dcdcdc"/></g><polygon points="15.0,-33.0 17.5,-23.6 25.0,-29.8 21.5,-20.7 31.2,-21.3 23.0,-16.0 31.2,-10.7 21.5,-11.3 25.0,-2.2 17.5,-8.4 15.0,1.0 12.5,-8.4 5.0,-2.2 8.5,-11.3 -1.2,-10.7 7.0,-16.0 -1.2,-21.3 8.5,-20.7 5.0,-29.8 12.5,-23.6" fill="#f7d774"/></svg><svg width="80" height="80" viewBox="-40.0 -40.0 80 80" style="left:100.0px;top:586.0px"><path d="M-3 -30H20L30 -20V14H-3Z" fill="#8cc4fa"/><path d="M20 -30V-20H30Z" fill="#b9dcfc"/><g transform="translate(0 3) scale(1.0)"><rect x="-26" y="-12" width="36" height="27" fill="#6b7180" stroke="#dcdcdc" stroke-width="2.4"/><circle cx="10" cy="15" r="12.5" fill="#6b7180" stroke="#dcdcdc" stroke-width="2.4"/><path d="M10 2.5V15H-2.5" fill="none" stroke="#dcdcdc" stroke-width="2.4"/><rect x="-29.5" y="11.5" width="7" height="7" fill="#dcdcdc"/></g></svg><svg width="80" height="80" viewBox="-40.0 -40.0 80 80" style="left:188.0px;top:586.0px"><g transform="translate(0 1) scale(1.0)"><rect x="-26" y="-12" width="36" height="27" fill="#6b7180" stroke="#dcdcdc" stroke-width="2.4"/><circle cx="10" cy="15" r="12.5" fill="#6b7180" stroke="#dcdcdc" stroke-width="2.4"/><path d="M10 2.5V15H-2.5" fill="none" stroke="#dcdcdc" stroke-width="2.4"/><rect x="-29.5" y="11.5" width="7" height="7" fill="#dcdcdc"/></g><g transform="translate(0 2) rotate(-48) scale(1.0)"><path d="M0 0L10.2 -6.2H27V6.2H10.2Z" fill="#f2c865" stroke="#3c4454" stroke-width="1.3"/><path d="M0 0L10.2 -6.2V6.2Z" fill="#d4d4d4" stroke="#3c4454" stroke-width="1"/><path d="M27 -6.2H29.5A5.0 6.2 0 0 1 29.5 6.2H27Z" fill="#e8685a"/></g></svg><svg width="80" height="80" viewBox="-40.0 -40.0 80 80" style="left:276.0px;top:586.0px"><path d="M-32 -28H-5L27 4L2 32L-32 -3Z" fill="#dcdcdc"/><circle cx="-20" cy="-16" r="4" fill="#3c4454"/><path d="M-12 -3L2 11M-5 -10L9 4M-17 3L-5 15" stroke="#8a8d94" stroke-width="2.2"/><g transform="translate(-3 4) rotate(-48) scale(1.0)"><path d="M0 0L10.2 -6.2H27V6.2H10.2Z" fill="#f2c865" stroke="#3c4454" stroke-width="1.3"/><path d="M0 0L10.2 -6.2V6.2Z" fill="#d4d4d4" stroke="#3c4454" stroke-width="1"/><path d="M27 -6.2H29.5A5.0 6.2 0 0 1 29.5 6.2H27Z" fill="#e8685a"/></g><path d="M42 43V35L34 43Z" fill="#8b9099"/></svg><svg width="44" height="44" viewBox="-22.0 -22.0 44 44" style="left:7.6px;top:673.8px"><g transform="translate(0 0) scale(1.0) rotate(0)"><path d="M-14 -14H2L16 0V6L6 16H0L-14 2Z" fill="#dcdcdc"/><circle cx="-8" cy="-8" r="2.6" fill="#3c4454"/><path d="M-6 0L2 8M-1 -4L7 4" stroke="#8a8d94" stroke-width="1.8"/></g></svg><svg width="44" height="44" viewBox="-22.0 -22.0 44 44" style="left:52.6px;top:673.8px"><g transform="translate(-1 4) scale(0.48)"><rect x="-26" y="-12" width="36" height="27" fill="#6b7180" stroke="#dcdcdc" stroke-width="2.4"/><circle cx="10" cy="15" r="12.5" fill="#6b7180" stroke="#dcdcdc" stroke-width="2.4"/><path d="M10 2.5V15H-2.5" fill="none" stroke="#dcdcdc" stroke-width="2.4"/><rect x="-29.5" y="11.5" width="7" height="7" fill="#dcdcdc"/></g><rect x="-2" y="-16" width="18" height="15" fill="#f4f4f4"/><rect x="-2" y="-16" width="18" height="3.6" fill="#8e9197"/><path d="M1 -9.2H3M5 -9.2H13M1 -5.800000000000001H3M5 -5.800000000000001H13" stroke="#3c4454" stroke-width="1.8"/></svg><svg width="44" height="44" viewBox="-22.0 -22.0 44 44" style="left:96.0px;top:673.8px"><g transform="translate(-1 4) scale(0.48)"><rect x="-26" y="-12" width="36" height="27" fill="#6b7180" stroke="#dcdcdc" stroke-width="2.4"/><circle cx="10" cy="15" r="12.5" fill="#6b7180" stroke="#dcdcdc" stroke-width="2.4"/><path d="M10 2.5V15H-2.5" fill="none" stroke="#dcdcdc" stroke-width="2.4"/><rect x="-29.5" y="11.5" width="7" height="7" fill="#dcdcdc"/></g><path d="M0 -17H16V-1H2L0 -3Z" fill="#b3b6bb"/><rect x="3" y="-17" width="10" height="5.8" fill="#f4f4f4"/><rect x="3" y="-7.1" width="10" height="6.1" fill="#f4f4f4"/></svg><svg width="44" height="44" viewBox="-22.0 -22.0 44 44" style="left:140.0px;top:673.8px"><rect x="-15" y="-15" width="26" height="26" fill="#6b7180" stroke="#dcdcdc" stroke-width="2.2"/><path d="M11 5V17M5 11H17" stroke="#3c4554" stroke-width="7"/><path d="M11 5V17M5 11H17" stroke="#5b9fe8" stroke-width="3.6"/></svg><svg width="44" height="44" viewBox="-22.0 -22.0 44 44" style="left:183.6px;top:673.8px"><g transform="translate(0 2) scale(0.95) rotate(0)"><path d="M-14 -14H2L16 0V6L6 16H0L-14 2Z" fill="#dcdcdc"/><circle cx="-8" cy="-8" r="2.6" fill="#3c4454"/><path d="M-6 0L2 8M-1 -4L7 4" stroke="#8a8d94" stroke-width="1.8"/></g><circle cx="8" cy="-8" r="9.5" fill="#3c4554"/><g transform="translate(8 -8)"><path d="M-5.6 0A5.6 5.6 0 0 1 4.2 -3.7" fill="none" stroke="#7fd486" stroke-width="2.4"/><path d="M1.1 -7.0L7.6 -5.0L4.2 0.3Z" fill="#7fd486"/><path d="M5.6 0A5.6 5.6 0 0 1 -4.2 3.7" fill="none" stroke="#7fd486" stroke-width="2.4"/><path d="M-1.1 7.0L-7.6 5.0L-4.2 -0.3Z" fill="#7fd486"/></g></svg><svg width="44" height="44" viewBox="-22.0 -22.0 44 44" style="left:228.0px;top:673.8px"><g transform="translate(0 2) scale(0.95) rotate(0)"><path d="M-14 -14H2L16 0V6L6 16H0L-14 2Z" fill="#dcdcdc"/><circle cx="-8" cy="-8" r="2.6" fill="#3c4454"/><path d="M-6 0L2 8M-1 -4L7 4" stroke="#8a8d94" stroke-width="1.8"/></g><rect x="0" y="-16" width="17" height="17" fill="#3c4554"/><rect x="5" y="-11" width="8" height="8" fill="#5b9fe8"/><path d="M2 -8V-14H8M10 -14H16V-8M16 -6V0H10M8 0H2V-6" stroke="#5b9fe8" stroke-width="2" fill="none" stroke-dasharray="5 1.5"/></svg><svg width="44" height="44" viewBox="-22.0 -22.0 44 44" style="left:272.0px;top:673.8px"><rect x="-14" y="-14" width="12" height="9" fill="#6b7180" stroke="#dcdcdc" stroke-width="1.6"/><circle cx="-1" cy="-6" r="4.4" fill="#6b7180" stroke="#dcdcdc" stroke-width="1.6"/><path d="M6 -11H14V-6" fill="none" stroke="#dcdcdc" stroke-width="1.8"/><path d="M9 -11L5 -14.5V-7.5Z" fill="#dcdcdc"/><rect x="-6" y="2" width="13" height="10" fill="#5d7ea8" stroke="#7ab9f5" stroke-width="1.8"/><circle cx="10" cy="11" r="5" fill="#5d7ea8" stroke="#7ab9f5" stroke-width="1.8"/></svg><div class="abs" style="left:8px;top:729.8px;width:352px;height:2.5px;background:#272d38"></div>
<svg width="18" height="10" viewBox="0 0 18 10" style="left:8.5px;top:752.0px"><path d="M0 0H17L8.5 9Z" fill="#f2f2f2"/></svg><div class="t" style="left:34.5px;top:746.2px;font-size:19.5px;font-weight:bold;color:#f4f4f4">修改</div><svg width="24" height="24" viewBox="-12.0 -12.0 24 24" style="left:336.5px;top:743.5px"><g fill="#f2f2f2"><rect x="-2.5" y="-10.2" width="5" height="20.4" rx="1" transform="rotate(0)"/><rect x="-2.5" y="-10.2" width="5" height="20.4" rx="1" transform="rotate(45)"/><rect x="-2.5" y="-10.2" width="5" height="20.4" rx="1" transform="rotate(90)"/><rect x="-2.5" y="-10.2" width="5" height="20.4" rx="1" transform="rotate(135)"/><circle r="6.8"/></g><circle r="3" fill="#3c4554"/></svg><svg width="76" height="76" viewBox="-38.0 -38.0 76 76" style="left:14.0px;top:780.5px"><path transform="rotate(0)" d="M0 -32.5L10.4 -17.5H2.6V-2H-2.6V-17.5H-10.4Z" fill="#fff"/><path transform="rotate(90)" d="M0 -32.5L10.4 -17.5H2.6V-2H-2.6V-17.5H-10.4Z" fill="#fff"/><path transform="rotate(180)" d="M0 -32.5L10.4 -17.5H2.6V-2H-2.6V-17.5H-10.4Z" fill="#fff"/><path transform="rotate(270)" d="M0 -32.5L10.4 -17.5H2.6V-2H-2.6V-17.5H-10.4Z" fill="#fff"/><rect x="-2.6" y="-2.6" width="5.2" height="5.2" fill="#fff"/></svg><svg width="44" height="44" viewBox="-22.0 -22.0 44 44" style="left:96.0px;top:774.3px"><circle cx="-9" cy="-9" r="5.6" fill="none" stroke="#dcdcdc" stroke-width="2"/><path d="M0 -13H9V-7" fill="none" stroke="#f4f4f4" stroke-width="2.2"/><path d="M4.5 -8.5H13.5L9 -3Z" fill="#f4f4f4"/><circle cx="-1" cy="9" r="5.6" fill="none" stroke="#7ab9f5" stroke-width="2.2"/><circle cx="9" cy="9" r="5.6" fill="none" stroke="#7ab9f5" stroke-width="2.2"/></svg><svg width="44" height="44" viewBox="-22.0 -22.0 44 44" style="left:140.0px;top:774.3px"><path d="M0 -12A12.5 12.5 0 1 0 12.5 2" fill="none" stroke="#f4f4f4" stroke-width="2.4"/><path d="M-1 -17.5L8.5 -12L-1 -6Z" fill="#f4f4f4"/></svg><svg width="44" height="44" viewBox="-22.0 -22.0 44 44" style="left:96.0px;top:818.0px"><path d="M-3 -12V13H-14Z" fill="none" stroke="#dcdcdc" stroke-width="2"/><path d="M3 -12V13H14Z" fill="none" stroke="#dcdcdc" stroke-width="2"/><path d="M3 -12V13" stroke="#7ab9f5" stroke-width="2"/></svg><svg width="44" height="44" viewBox="-22.0 -22.0 44 44" style="left:140.0px;top:818.0px"><rect x="-14" y="-14" width="20" height="20" fill="none" stroke="#dcdcdc" stroke-width="2.2" stroke-dasharray="4 4"/><rect x="-7.5" y="-7.5" width="7" height="7" fill="#dcdcdc"/><path d="M2 1L2 18L6.5 14.5L15 14Z" fill="#f4f4f4"/><path d="M13 -8V-2M10 -5H16" stroke="#f4f4f4" stroke-width="1.8"/></svg><svg width="76" height="76" viewBox="-38.0 -38.0 76 76" style="left:190.0px;top:780.5px"><path d="M-32 -27.5H-26M-22 -27.5H-16M-12 -27.5H-6M-2 -27.5H2" stroke="#7ab9f5" stroke-width="2.2"/><path d="M16 -27.5H32" stroke="#dcdcdc" stroke-width="2.2"/><path d="M4.5 -32.5L11.8 -26.5V9L4.5 1Z" fill="#fff"/><path d="M-16.5 -20.5H-8.5L11.5 0V9L5 11L-16.5 -10.5Z" fill="#fff"/><circle cx="7.2" cy="5.5" r="1.8" fill="#3c4554"/><ellipse cx="3.6" cy="21.5" rx="5.6" ry="8.6" fill="none" stroke="#fff" stroke-width="4.4" transform="rotate(14 3.6 21.5)"/><ellipse cx="18" cy="15.2" rx="5.6" ry="8.6" fill="none" stroke="#fff" stroke-width="4.4" transform="rotate(52 18 15.2)"/><path d="M42 45V37L34 45Z" fill="#8b9099"/></svg><svg width="44" height="44" viewBox="-22.0 -22.0 44 44" style="left:272.0px;top:774.3px"><path d="M-15 15V3" stroke="#dcdcdc" stroke-width="2.2"/><path d="M3 -15H15" stroke="#dcdcdc" stroke-width="2.2"/><path d="M-15 1A16 16 0 0 1 1 -15" fill="none" stroke="#7ab9f5" stroke-width="2.4"/><path d="M22 21.5V14.5L15 21.5Z" fill="#8b9099"/></svg><svg width="44" height="44" viewBox="-22.0 -22.0 44 44" style="left:316.0px;top:774.3px"><rect x="-14" y="-14" width="12" height="12" fill="#dcdcdc"/><rect x="2" y="-14" width="12" height="12" fill="#7ab9f5"/><rect x="-14" y="2" width="12" height="12" fill="#7ab9f5"/><rect x="2" y="2" width="12" height="12" fill="#7ab9f5"/><path d="M22 21.5V14.5L15 21.5Z" fill="#8b9099"/></svg><svg width="44" height="44" viewBox="-22.0 -22.0 44 44" style="left:272.0px;top:818.0px"><path d="M15 -11H-4A11 11 0 0 0 -4 11H15" fill="none" stroke="#7ab9f5" stroke-width="2.4"/><path d="M15 -4.5H-3A4.5 4.5 0 0 0 -3 4.5H15" fill="none" stroke="#dcdcdc" stroke-width="2.2"/></svg><svg width="44" height="44" viewBox="-22.0 -22.0 44 44" style="left:316.0px;top:818.0px"><rect x="-14" y="-5" width="20" height="18" fill="none" stroke="#dcdcdc" stroke-width="2.2"/><path d="M-14 -5L-6 -13H15L6 -5M15 -13V5L6 13" fill="none" stroke="#7ab9f5" stroke-width="2.2"/><path d="M-3 -9.5H7" stroke="#7ab9f5" stroke-width="2.4"/></svg><svg width="44" height="44" viewBox="-22.0 -22.0 44 44" style="left:7.6px;top:866.0px"><path d="M-15 -15H-2V15H-15Z" fill="none" stroke="#dcdcdc" stroke-width="2.2"/><path d="M2 -15H9L16 15H2" fill="none" stroke="#7ab9f5" stroke-width="2.2"/><path d="M-8 7H4" stroke="#f4f4f4" stroke-width="2.2"/><path d="M2 2.5L8 7L2 11.5Z" fill="#f4f4f4"/></svg><svg width="44" height="44" viewBox="-22.0 -22.0 44 44" style="left:52.6px;top:866.0px"><path d="M-15 -11L-11 -15H3V-1L-1 3H-15Z" fill="#dcdcdc"/><path d="M-15 -11H-1V3M-1 -11L3 -15" stroke="#c4c4c4" stroke-width="1" fill="none"/><rect x="2" y="2" width="14" height="14" fill="#7ab9f5"/><path d="M-13 7V11H-6" fill="none" stroke="#f4f4f4" stroke-width="2"/><path d="M-7 7.5L-2 11L-7 14.5Z" fill="#f4f4f4"/></svg><svg width="44" height="44" viewBox="-22.0 -22.0 44 44" style="left:96.0px;top:866.0px"><path d="M-15 15V-15H15V15H8" fill="none" stroke="#7ab9f5" stroke-width="2.2"/><rect x="-15" y="-1" width="16" height="16" fill="none" stroke="#dcdcdc" stroke-width="2.2"/></svg><svg width="44" height="44" viewBox="-22.0 -22.0 44 44" style="left:140.0px;top:866.0px"><path d="M-14 14L-3 3M3 -3L15 -15" stroke="#dcdcdc" stroke-width="2.2"/><path d="M-6 -6L6 6" stroke="#7ab9f5" stroke-width="2.4"/><path d="M22 21.5V14.5L15 21.5Z" fill="#8b9099"/></svg><svg width="44" height="44" viewBox="-22.0 -22.0 44 44" style="left:183.6px;top:866.0px"><path d="M-16 0H-8M8 0H16" stroke="#dcdcdc" stroke-width="2"/><path d="M-2 0L-10 -5V5Z M2 0L10 -5V5Z" fill="#7ab9f5"/><path d="M-3 0H3" stroke="#7ab9f5" stroke-width="2"/></svg><svg width="44" height="44" viewBox="-22.0 -22.0 44 44" style="left:228.0px;top:866.0px"><rect x="-15" y="-14" width="19" height="15" fill="#b3b6bb"/><rect x="-2" y="-1" width="17" height="14" fill="#3c4554" stroke="#dcdcdc" stroke-width="2"/><path d="M11 10H3L11 4Z" fill="#dcdcdc"/><path d="M7 -12H14V-8" fill="none" stroke="#f4f4f4" stroke-width="1.8"/><path d="M10.5 -8.5H17.5L14 -4Z" fill="#f4f4f4"/><path d="M-6 12H-12V7" fill="none" stroke="#f4f4f4" stroke-width="1.8"/><path d="M-15.5 8H-8.5L-12 3.5Z" fill="#f4f4f4"/></svg><svg width="44" height="44" viewBox="-22.0 -22.0 44 44" style="left:272.0px;top:866.0px"><rect x="-15" y="-14" width="14" height="11" fill="#6b7180" stroke="#dcdcdc" stroke-width="1.8"/><circle cx="1" cy="-4" r="5.6" fill="#6b7180" stroke="#dcdcdc" stroke-width="1.8"/><path d="M-11 2V11H-4" fill="none" stroke="#f4f4f4" stroke-width="2"/><path d="M-5 7L0 11L-5 15Z" fill="#f4f4f4"/><circle cx="10" cy="10" r="5" fill="none" stroke="#7ab9f5" stroke-width="2.2"/></svg><svg width="44" height="44" viewBox="-22.0 -22.0 44 44" style="left:316.0px;top:866.0px"><path d="M0 -16V3" stroke="#e8a24c" stroke-width="2.4"/><path d="M-3 3H3L9 15H-9Z" fill="#f2c865"/><path d="M-3 3H3L4.5 6H-4.5Z" fill="#e8a24c"/></svg><div class="abs" style="left:8px;top:921.8px;width:352px;height:2.5px;background:#272d38"></div>
<svg width="18" height="10" viewBox="0 0 18 10" style="left:8.5px;top:944.1px"><path d="M0 0H17L8.5 9Z" fill="#f2f2f2"/></svg><div class="t" style="left:34.5px;top:938.3px;font-size:19.5px;font-weight:bold;color:#f4f4f4">文字</div><svg width="24" height="24" viewBox="-12.0 -12.0 24 24" style="left:336.5px;top:935.6px"><g fill="#f2f2f2"><rect x="-2.5" y="-10.2" width="5" height="20.4" rx="1" transform="rotate(0)"/><rect x="-2.5" y="-10.2" width="5" height="20.4" rx="1" transform="rotate(45)"/><rect x="-2.5" y="-10.2" width="5" height="20.4" rx="1" transform="rotate(90)"/><rect x="-2.5" y="-10.2" width="5" height="20.4" rx="1" transform="rotate(135)"/><circle r="6.8"/></g><circle r="3" fill="#3c4554"/></svg><svg width="80" height="80" viewBox="-40.0 -40.0 80 80" style="left:12.0px;top:970.0px"><text x="0" y="28" font-size="78" font-weight="normal" text-anchor="middle" fill="#dcdcdc" font-family="Liberation Sans, sans-serif">A</text></svg><svg width="84" height="84" viewBox="-42.0 -42.0 84 84" style="left:98.0px;top:968.0px"><text x="-10" y="18" font-size="71" font-weight="normal" text-anchor="middle" fill="#dcdcdc" font-family="Liberation Sans, sans-serif">A</text><g transform="translate(-4 31) scale(1.05)"><path d="M0 0C9 1.5 17 -2.5 21 -9.5L14.5 -14.5C7.5 -12 3 -5.5 0 0Z" fill="#d9b27c"/><path d="M16 -12.5L29.5 -25.5L34.5 -20.5L21 -7.5Z" fill="#f4f4f4" stroke="#3c4454" stroke-width="1"/></g></svg><svg width="44" height="44" viewBox="-22.0 -22.0 44 44" style="left:183.6px;top:965.6px"><text x="0.5" y="11.5" font-size="38" font-weight="normal" text-anchor="middle" fill="#dcdcdc" font-family="Liberation Sans, sans-serif">A</text><path d="M-16 15.5H17" stroke="#7ab9f5" stroke-width="2.4"/></svg><svg width="44" height="44" viewBox="-22.0 -22.0 44 44" style="left:228.0px;top:965.6px"><text x="0" y="-3" font-size="12.5" font-weight="bold" text-anchor="middle" fill="#dcdcdc" font-family="Liberation Sans, sans-serif">ABC</text><path transform="translate(0 9) scale(0.95)" d="M-8 0L-3 5L8 -7" fill="none" stroke="#7fd486" stroke-width="4" stroke-linejoin="miter"/></svg><svg width="44" height="44" viewBox="-22.0 -22.0 44 44" style="left:272.0px;top:965.6px"><rect x="-8" y="-1" width="24" height="8" fill="#8cc4fa"/><rect x="-8" y="9" width="24" height="8" fill="#dcdcdc"/><rect x="-16" y="-16" width="18" height="18" fill="#eef2f8"/><path d="M-13 -11H-11M-9 -11H-1M-13 -7H-11M-9 -7H-1M-13 -3H-11M-9 -3H-1" stroke="#3f74d8" stroke-width="2"/><text x="10.5" y="-3" font-size="17" font-weight="bold" text-anchor="middle" fill="#5b9fe8" font-family="Liberation Sans, sans-serif">A</text></svg><svg width="44" height="44" viewBox="-22.0 -22.0 44 44" style="left:316.0px;top:965.6px"><text x="-3" y="-7" font-size="11" font-weight="bold" text-anchor="middle" fill="#dcdcdc" font-family="Liberation Sans, sans-serif">PDF</text><path d="M-12 -3V5H-5" fill="none" stroke="#fff" stroke-width="2.2"/><path d="M-6 1L-1 5L-6 9Z" fill="#fff"/><text x="8" y="15" font-size="24" font-weight="normal" text-anchor="middle" fill="#5b9fe8" font-family="Liberation Sans, sans-serif">A</text></svg><svg width="44" height="44" viewBox="-22.0 -22.0 44 44" style="left:183.6px;top:1009.8px"><rect x="-16" y="-14" width="22" height="24" fill="#dcdcdc"/><path d="M-12 -9H2M-12 -5H2M-12 -1H2" stroke="#7b7f88" stroke-width="1.6"/><path d="M9 -12H14V-6" fill="none" stroke="#fff" stroke-width="2"/><path d="M10.5 -7H17.5L14 -2Z" fill="#fff"/><rect x="-3" y="-1" width="19" height="19" fill="#3c4554" opacity=".0"/><text x="7" y="18" font-size="26" font-weight="normal" text-anchor="middle" fill="#fff" font-family="Liberation Sans, sans-serif">A</text></svg><svg width="44" height="44" viewBox="-22.0 -22.0 44 44" style="left:228.0px;top:1009.8px"><circle cx="-3" cy="-4" r="12" fill="none" stroke="#fff" stroke-width="2.2"/><text x="-3" y="2" font-size="17" font-weight="normal" text-anchor="middle" fill="#fff" font-family="Liberation Sans, sans-serif">A</text><path d="M6 6L16 16" stroke="#d8a860" stroke-width="3.4"/></svg><svg width="44" height="44" viewBox="-22.0 -22.0 44 44" style="left:272.0px;top:1009.8px"><text x="-9" y="-3" font-size="18" font-weight="bold" text-anchor="middle" fill="#5b9fe8" font-family="Liberation Sans, sans-serif">A</text><g transform="translate(8 -9.5)"><path d="M-6.4 0A6.4 6.4 0 0 1 4.8 -4.2" fill="none" stroke="#7fd486" stroke-width="2.4"/><path d="M1.3 -8.0L8.6 -5.8L4.8 0.3Z" fill="#7fd486"/><path d="M6.4 0A6.4 6.4 0 0 1 -4.8 4.2" fill="none" stroke="#7fd486" stroke-width="2.4"/><path d="M-1.3 8.0L-8.6 5.8L-4.8 -0.3Z" fill="#7fd486"/></g><rect x="-16" y="0" width="24" height="8" fill="#8cc4fa"/><rect x="-16" y="10" width="24" height="8" fill="#dcdcdc"/></svg><svg width="44" height="44" viewBox="-22.0 -22.0 44 44" style="left:316.0px;top:1009.8px"><text x="-4" y="-8" font-size="11" font-weight="bold" text-anchor="middle" fill="#dcdcdc" font-family="Liberation Sans, sans-serif">PDF</text><path d="M-13 -4V4H-6" fill="none" stroke="#fff" stroke-width="2.2"/><path d="M-7 0L-2 4L-7 8Z" fill="#fff"/><text x="6" y="13" font-size="19" font-weight="normal" text-anchor="middle" fill="#dcdcdc" font-family="Liberation Sans, sans-serif">A</text><path d="M2 17L12 7" stroke="#5b9fe8" stroke-width="3.2"/><path d="M10 4A4.5 4.5 0 1 0 16 9" fill="none" stroke="#5b9fe8" stroke-width="2.6"/></svg><div class="abs" style="left:8px;top:1065.8px;width:352px;height:2.5px;background:#272d38"></div><svg width="18" height="10" viewBox="0 0 18 10" style="left:8.5px;top:1088.3px"><path d="M0 0H17L8.5 9Z" fill="#f2f2f2"/></svg><div class="t" style="left:34.5px;top:1082.5px;font-size:19.5px;font-weight:bold;color:#f4f4f4">标注</div><svg width="24" height="24" viewBox="-12.0 -12.0 24 24" style="left:336.5px;top:1079.8px"><g fill="#f2f2f2"><rect x="-2.5" y="-10.2" width="5" height="20.4" rx="1" transform="rotate(0)"/><rect x="-2.5" y="-10.2" width="5" height="20.4" rx="1" transform="rotate(45)"/><rect x="-2.5" y="-10.2" width="5" height="20.4" rx="1" transform="rotate(90)"/><rect x="-2.5" y="-10.2" width="5" height="20.4" rx="1" transform="rotate(135)"/><circle r="6.8"/></g><circle r="3" fill="#3c4554"/></svg><svg width="80" height="80" viewBox="-40.0 -40.0 80 80" style="left:12.0px;top:1114.0px"><path d="M-31 -32V32M31 -32V32" stroke="#dcdcdc" stroke-width="2.2"/><path d="M-22 -18.5H22" stroke="#dcdcdc" stroke-width="2.2"/><path d="M-29 -18.5L-21 -23.1V-13.9Z M29 -18.5L21 -23.1V-13.9Z" fill="#dcdcdc"/><path transform="translate(0 25) rotate(-80) translate(0 -13)" d="M0 -13C2.4 -8 3.2 -3 3.2 0H-3.2C-3.2 -3 -2.4 -8 0 -13Z" fill="#f5d470"/><path transform="translate(0 25) rotate(-40) translate(0 -13)" d="M0 -13C2.4 -8 3.2 -3 3.2 0H-3.2C-3.2 -3 -2.4 -8 0 -13Z" fill="#f5d470"/><path transform="translate(0 25) rotate(0) translate(0 -13)" d="M0 -13C2.4 -8 3.2 -3 3.2 0H-3.2C-3.2 -3 -2.4 -8 0 -13Z" fill="#f5d470"/><path transform="translate(0 25) rotate(40) translate(0 -13)" d="M0 -13C2.4 -8 3.2 -3 3.2 0H-3.2C-3.2 -3 -2.4 -8 0 -13Z" fill="#f5d470"/><path transform="translate(0 25) rotate(80) translate(0 -13)" d="M0 -13C2.4 -8 3.2 -3 3.2 0H-3.2C-3.2 -3 -2.4 -8 0 -13Z" fill="#f5d470"/></svg><svg width="84" height="84" viewBox="-42.0 -42.0 84 84" style="left:98.0px;top:1112.0px"><path d="M-31 -9V25M31 -9V25" stroke="#dcdcdc" stroke-width="2.2"/><path d="M-22 8H22" stroke="#dcdcdc" stroke-width="2.2"/><path d="M-29 8L-21 3.4000000000000004V12.6Z M29 8L21 3.4000000000000004V12.6Z" fill="#dcdcdc"/><g transform="translate(-4 4) scale(1.05)"><path d="M0 0C9 1.5 17 -2.5 21 -9.5L14.5 -14.5C7.5 -12 3 -5.5 0 0Z" fill="#d9b27c"/><path d="M16 -12.5L29.5 -25.5L34.5 -20.5L21 -7.5Z" fill="#f4f4f4" stroke="#3c4454" stroke-width="1"/></g></svg><svg width="44" height="44" viewBox="-22.0 -22.0 44 44" style="left:183.6px;top:1109.8px"><path d="M-15 -14V14M15 -14V14" stroke="#dcdcdc" stroke-width="2.2"/><path d="M-9 -5H9" stroke="#7ab9f5" stroke-width="2.2"/><path d="M-13 -5L-8 -8.2V-1.7999999999999998Z M13 -5L8 -8.2V-1.7999999999999998Z" fill="#7ab9f5"/><path d="M22 21.5V14.5L15 21.5Z" fill="#8b9099"/></svg><svg width="44" height="44" viewBox="-22.0 -22.0 44 44" style="left:228.0px;top:1109.8px"><circle r="14.5" fill="none" stroke="#dcdcdc" stroke-width="2.2"/><path d="M-5 0H5M0 -5V5" stroke="#7ab9f5" stroke-width="2.2"/><path d="M22 21.5V14.5L15 21.5Z" fill="#8b9099"/></svg><svg width="44" height="44" viewBox="-22.0 -22.0 44 44" style="left:272.0px;top:1109.8px"><path d="M-3 -16V6" stroke="#dcdcdc" stroke-width="2"/><path d="M-7.5 4H1.5L-3 11Z" fill="#dcdcdc"/><path d="M-10 14H4" stroke="#dcdcdc" stroke-width="2"/><path d="M-16 -4H-10M1 -4H8" stroke="#7ab9f5" stroke-width="2.4"/><path d="M14 -4L7 -8.5V0.5Z" fill="#7ab9f5"/><path d="M15.5 -10V3" stroke="#dcdcdc" stroke-width="2"/></svg><svg width="44" height="44" viewBox="-22.0 -22.0 44 44" style="left:316.0px;top:1109.8px"><path d="M-11.5 -12H11.5" stroke="#dcdcdc" stroke-width="2"/><path d="M-16 -12L-10.5 -15.4V-8.6Z M16 -12L10.5 -15.4V-8.6Z" fill="#dcdcdc"/><path d="M-11.5 12H11.5" stroke="#dcdcdc" stroke-width="2"/><path d="M-16 12L-10.5 8.6V15.4Z M16 12L10.5 8.6V15.4Z" fill="#dcdcdc"/><rect x="-4" y="-10" width="9" height="17" fill="#f2c865"/><path d="M-4 -7H-1M-4 -4H0M-4 -1H-1M-4 2H0M-4 5H-1" stroke="#c89a3c" stroke-width="1"/></svg><svg width="44" height="44" viewBox="-22.0 -22.0 44 44" style="left:183.6px;top:1154.3px"><path d="M-15 -10V17M-1 -10V17M13 -2V17" stroke="#dcdcdc" stroke-width="2.2"/><path d="M-10 -1H-6" stroke="#7ab9f5" stroke-width="2"/><path d="M-13 -1L-9 -3.8V1.7999999999999998Z M-3 -1L-7 -3.8V1.7999999999999998Z" fill="#7ab9f5"/><path d="M1 -1H5" stroke="#7ab9f5" stroke-width="2"/><circle cx="11" cy="-8.5" r="9.2" fill="#ee7b36" stroke="#fff" stroke-width="1.8"/><path d="M22 21.5V14.5L15 21.5Z" fill="#8b9099"/></svg><svg width="44" height="44" viewBox="-22.0 -22.0 44 44" style="left:228.0px;top:1154.3px"><rect x="-15" y="-7" width="30" height="21" fill="none" stroke="#dcdcdc" stroke-width="2.2"/><path d="M0 -7V14" stroke="#dcdcdc" stroke-width="2"/><circle cx="-7.5" cy="3.5" r="3.8" fill="none" stroke="#fff" stroke-width="1.8"/><path d="M-13.5 3.5H-1.5M-7.5 -2.5V9.5" stroke="#fff" stroke-width="1.6"/><text x="8" y="10" font-size="14" font-weight="bold" text-anchor="middle" fill="#fff" font-family="Liberation Sans, sans-serif">.1</text></svg><svg width="44" height="44" viewBox="-22.0 -22.0 44 44" style="left:272.0px;top:1154.3px"><path d="M-15 -13V17M15 -13V17" stroke="#dcdcdc" stroke-width="2.2"/><path d="M-9 -5H9" stroke="#dcdcdc" stroke-width="2"/><path d="M-13 -5L-8 -8.2V-1.7999999999999998Z M13 -5L8 -8.2V-1.7999999999999998Z" fill="#dcdcdc"/><path transform="translate(0.5 10) scale(0.85)" d="M-8 0L-3 5L8 -7" fill="none" stroke="#7fd486" stroke-width="4" stroke-linejoin="miter"/></svg><svg width="44" height="44" viewBox="-22.0 -22.0 44 44" style="left:316.0px;top:1154.3px"><path d="M-17 -6L-6 -16M4 14L15 4" stroke="#dcdcdc" stroke-width="2.4"/><path d="M-8 -7L6 6" stroke="#dcdcdc" stroke-width="2"/><path d="M-11.5 -10L-4 -8.5L-9.5 -3.5Z M9 9L2 7L7 2.5Z" fill="#dcdcdc"/><text x="7" y="-3" font-size="17" font-weight="bold" text-anchor="middle" fill="#5b9fe8" font-family="Liberation Sans, sans-serif">x</text><path d="M23 21.5V14.5L16 21.5Z" fill="#8b9099"/></svg><div class="abs" style="left:8px;top:1209.8px;width:352px;height:2.5px;background:#272d38"></div><svg width="18" height="10" viewBox="0 0 18 10" style="left:8.5px;top:1232.0px"><path d="M0 0H17L8.5 9Z" fill="#f2f2f2"/></svg><div class="t" style="left:34.5px;top:1226.2px;font-size:19.5px;font-weight:bold;color:#f4f4f4">引线</div><svg width="24" height="24" viewBox="-12.0 -12.0 24 24" style="left:336.5px;top:1223.5px"><g fill="#f2f2f2"><rect x="-2.5" y="-10.2" width="5" height="20.4" rx="1" transform="rotate(0)"/><rect x="-2.5" y="-10.2" width="5" height="20.4" rx="1" transform="rotate(45)"/><rect x="-2.5" y="-10.2" width="5" height="20.4" rx="1" transform="rotate(90)"/><rect x="-2.5" y="-10.2" width="5" height="20.4" rx="1" transform="rotate(135)"/><circle r="6.8"/></g><circle r="3" fill="#3c4554"/></svg><svg width="84" height="84" viewBox="-42.0 -42.0 84 84" style="left:10.0px;top:1256.0px"><g transform="translate(0 0) scale(1.0)"><circle cx="17" cy="-15" r="14.5" fill="none" stroke="#dcdcdc" stroke-width="2.2"/><path d="M2.5 -15H-7L-24 17" fill="none" stroke="#dcdcdc" stroke-width="2.2"/><path d="M-32 30L-31 15L-19 21Z" fill="#dcdcdc"/></g><circle cx="34" cy="-34" r="9.4" fill="#ee7b36" stroke="#fbe9dc" stroke-width="1.8"/></svg><svg width="84" height="84" viewBox="-42.0 -42.0 84 84" style="left:98.0px;top:1256.0px"><g transform="translate(0 0) scale(1.0)"><circle cx="17" cy="-15" r="14.5" fill="none" stroke="#dcdcdc" stroke-width="2.2"/><path d="M2.5 -15H-7L-24 17" fill="none" stroke="#dcdcdc" stroke-width="2.2"/><path d="M-32 30L-31 15L-19 21Z" fill="#dcdcdc"/></g><g transform="translate(-4 31.5) scale(1.05)"><path d="M0 0C9 1.5 17 -2.5 21 -9.5L14.5 -14.5C7.5 -12 3 -5.5 0 0Z" fill="#d9b27c"/><path d="M16 -12.5L29.5 -25.5L34.5 -20.5L21 -7.5Z" fill="#f4f4f4" stroke="#3c4454" stroke-width="1"/></g></svg><svg width="44" height="44" viewBox="-22.0 -22.0 44 44" style="left:183.6px;top:1254.3px"><path d="M-8 -15.5V-1.5M-15 -8.5H-1" stroke="#7fd486" stroke-width="3.8"/><circle cx="11" cy="-2" r="4.4" fill="none" stroke="#dcdcdc" stroke-width="2"/><path d="M6.6 -2H1L-7 12M1 -2L8 12" fill="none" stroke="#dcdcdc" stroke-width="2"/><path d="M-10 17L-9.5 9L-3.5 12.5Z M11 17L4 13L10 9Z" fill="#dcdcdc"/></svg><svg width="44" height="44" viewBox="-22.0 -22.0 44 44" style="left:228.0px;top:1254.3px"><circle cx="7" cy="-11" r="4.4" fill="none" stroke="#dcdcdc" stroke-width="2"/><path d="M2.6 -11H-7L-12 -3" fill="none" stroke="#dcdcdc" stroke-width="2"/><path d="M-15.5 1L-15 -7L-9 -3.5Z" fill="#dcdcdc"/><circle cx="7" cy="1.5" r="4.4" fill="none" stroke="#dcdcdc" stroke-width="2"/><path d="M2.6 1.5H-2L-9 12" fill="none" stroke="#dcdcdc" stroke-width="2"/><path d="M-11.5 15.5L-11 7.5L-5 11Z" fill="#dcdcdc"/><path d="M15 -16V16" stroke="#7ab9f5" stroke-width="2.2"/></svg><svg width="44" height="44" viewBox="-22.0 -22.0 44 44" style="left:272.0px;top:1254.3px"><circle cx="9" cy="-9" r="6" fill="none" stroke="#dcdcdc" stroke-width="2"/><path d="M3 -9H-3L-11 7" fill="none" stroke="#dcdcdc" stroke-width="2"/><path d="M-15.5 13L-15 4L-8.5 8Z" fill="#dcdcdc"/><path transform="translate(8 8) scale(0.9)" d="M3 -9L-5 1.5H-0.5L-3 9L6 -2.5H1Z" fill="#f2c865"/></svg><svg width="44" height="44" viewBox="-22.0 -22.0 44 44" style="left:183.6px;top:1298.3px"><path d="M-13 -14L-3 -4M-3 -14L-13 -4" stroke="#e8685f" stroke-width="3.8"/><circle cx="11" cy="-2" r="4.4" fill="none" stroke="#dcdcdc" stroke-width="2"/><path d="M6.6 -2H1L-7 12M1 -2L8 12" fill="none" stroke="#dcdcdc" stroke-width="2"/><path d="M-10 17L-9.5 9L-3.5 12.5Z M11 17L4 13L10 9Z" fill="#dcdcdc"/></svg><svg width="44" height="44" viewBox="-22.0 -22.0 44 44" style="left:228.0px;top:1298.3px"><circle cx="9" cy="-9.5" r="6.4" fill="none" stroke="#dcdcdc" stroke-width="2"/><circle cx="9" cy="7.5" r="6.4" fill="none" stroke="#dcdcdc" stroke-width="2"/><path d="M2.6 -9.5H-4L-12 7" fill="none" stroke="#dcdcdc" stroke-width="2"/><path d="M-16 13L-15.5 4.5L-9 8Z" fill="#dcdcdc"/></svg><div class="abs" style="left:8px;top:1353.4px;width:352px;height:2.5px;background:#272d38"></div><svg width="18" height="10" viewBox="0 0 18 10" style="left:8.5px;top:1376.3px"><path d="M0 0H17L8.5 9Z" fill="#f2f2f2"/></svg><div class="t" style="left:34.5px;top:1370.5px;font-size:19.5px;font-weight:bold;color:#f4f4f4">表格</div><svg width="24" height="24" viewBox="-12.0 -12.0 24 24" style="left:336.5px;top:1367.8px"><g fill="#f2f2f2"><rect x="-2.5" y="-10.2" width="5" height="20.4" rx="1" transform="rotate(0)"/><rect x="-2.5" y="-10.2" width="5" height="20.4" rx="1" transform="rotate(45)"/><rect x="-2.5" y="-10.2" width="5" height="20.4" rx="1" transform="rotate(90)"/><rect x="-2.5" y="-10.2" width="5" height="20.4" rx="1" transform="rotate(135)"/><circle r="6.8"/></g><circle r="3" fill="#3c4554"/></svg><svg width="80" height="80" viewBox="-40.0 -40.0 80 80" style="left:12.0px;top:1402.0px"><path d="M-30 -26H30.5V26.5H-30ZM-30 -9.6H30.5M-30 2.4H30.5M-30 14.5H30.5M-9.8 -9.600000000000001V26.5M10.3 -9.600000000000001V26.5" fill="none" stroke="#dcdcdc" stroke-width="2.2"/></svg><svg width="84" height="84" viewBox="-42.0 -42.0 84 84" style="left:98.0px;top:1400.0px"><path d="M-31 -31H23.5V21H-31ZM-31 -15.5H23.5M-31 -3.3H23.5M-31 8.8H23.5M-12.8 -15.5V21M5.3 -15.5V21" fill="none" stroke="#dcdcdc" stroke-width="2.2"/><rect x="8" y="6" width="20" height="18" fill="#3c4554" opacity=".0"/><g transform="translate(-4 31.5) scale(1.05)"><path d="M0 0C9 1.5 17 -2.5 21 -9.5L14.5 -14.5C7.5 -12 3 -5.5 0 0Z" fill="#d9b27c"/><path d="M16 -12.5L29.5 -25.5L34.5 -20.5L21 -7.5Z" fill="#f4f4f4" stroke="#3c4454" stroke-width="1"/></g></svg><svg width="44" height="44" viewBox="-22.0 -22.0 44 44" style="left:183.6px;top:1398.3px"><path d="M-15 -13H4L16 -3V11H-15Z" fill="#dcdcdc"/><path d="M4 -13V-3H16Z" fill="#f6f6f6"/><path d="M-9 -6H3M-9 -1.5H3M-9 3H3M-9 -6V3M-3.0 -6V3M3 -6V3" stroke="#9a9da3" stroke-width="1.6" fill="none"/><rect x="-1" y="0" width="17" height="14" fill="#f4f4f4"/><rect x="-1" y="0" width="17" height="3.6" fill="#8e9197"/><path d="M2 6.8H4M6 6.8H13M2 10.2H4M6 10.2H13" stroke="#3c4454" stroke-width="1.8"/><g fill="none" stroke="#3c4454" stroke-width="4.6"><ellipse cx="-12" cy="-13.5" rx="2.6" ry="3.6"/><ellipse cx="-12" cy="-6.5" rx="2.6" ry="3.6"/></g><g fill="none" stroke="#e8c08c" stroke-width="2.2"><ellipse cx="-12" cy="-13.5" rx="2.6" ry="3.6"/><ellipse cx="-12" cy="-6.5" rx="2.6" ry="3.6"/></g></svg><svg width="44" height="44" viewBox="-22.0 -22.0 44 44" style="left:228.0px;top:1398.3px"><path d="M-15 -14H4L15 -4V9H-15Z" fill="#dcdcdc"/><path d="M4 -14V-4H15Z" fill="#f6f6f6"/><path d="M-8 -8H4M-8 -3.0H4M-8 2H4M-8 -8V2M-2.0 -8V2M4 -8V2" stroke="#9a9da3" stroke-width="1.6" fill="none"/><path d="M5 -3H12V6H16L8.5 16L1 6H5Z" fill="#7ab9f5" stroke="#3c4454" stroke-width="1.2"/><g fill="none" stroke="#3c4454" stroke-width="4.6"><ellipse cx="-12" cy="-13.5" rx="2.6" ry="3.6"/><ellipse cx="-12" cy="-6.5" rx="2.6" ry="3.6"/></g><g fill="none" stroke="#e8c08c" stroke-width="2.2"><ellipse cx="-12" cy="-13.5" rx="2.6" ry="3.6"/><ellipse cx="-12" cy="-6.5" rx="2.6" ry="3.6"/></g></svg><svg width="44" height="44" viewBox="-22.0 -22.0 44 44" style="left:183.6px;top:1442.0px"><rect x="-8" y="0" width="24" height="8" fill="#8cc4fa"/><rect x="-8" y="10" width="24" height="8" fill="#dcdcdc"/><rect x="-16" y="-15" width="18" height="18" fill="#eef2f8"/><path d="M-13 -10H-11M-9 -10H-1M-13 -6H-11M-9 -6H-1M-13 -2H-11M-9 -2H-1" stroke="#3f74d8" stroke-width="2"/><text x="10.5" y="-2" font-size="17" font-weight="bold" text-anchor="middle" fill="#5b9fe8" font-family="Liberation Sans, sans-serif">A</text></svg><svg width="44" height="44" viewBox="-22.0 -22.0 44 44" style="left:228.0px;top:1442.0px"><path d="M-15 -7H6L16 1V17H-15Z" fill="#dcdcdc"/><path d="M-9 0H9M-9 5.0H9M-9 10H9M-9 0V10M0.0 0V10M9 0V10" stroke="#9a9da3" stroke-width="1.6" fill="none"/><circle cx="8" cy="-8" r="9.4" fill="#3c4554"/><g transform="translate(8 -8)"><path d="M-5.8 0A5.8 5.8 0 0 1 4.3 -3.8" fill="none" stroke="#7fd486" stroke-width="2.4"/><path d="M1.2 -7.2L7.8 -5.2L4.3 0.3Z" fill="#7fd486"/><path d="M5.8 0A5.8 5.8 0 0 1 -4.3 3.8" fill="none" stroke="#7fd486" stroke-width="2.4"/><path d="M-1.2 7.2L-7.8 5.2L-4.3 -0.3Z" fill="#7fd486"/></g><g fill="none" stroke="#3c4454" stroke-width="4.6"><ellipse cx="-12" cy="-11.5" rx="2.6" ry="3.6"/><ellipse cx="-12" cy="-4.5" rx="2.6" ry="3.6"/></g><g fill="none" stroke="#e8c08c" stroke-width="2.2"><ellipse cx="-12" cy="-11.5" rx="2.6" ry="3.6"/><ellipse cx="-12" cy="-4.5" rx="2.6" ry="3.6"/></g></svg><div class="abs" style="left:8px;top:1498.0px;width:352px;height:2.5px;background:#272d38"></div><svg width="18" height="10" viewBox="0 0 18 10" style="left:8.5px;top:1519.9px"><path d="M0 0H17L8.5 9Z" fill="#f2f2f2"/></svg><div class="t" style="left:34.5px;top:1514.1px;font-size:19.5px;font-weight:bold;color:#f4f4f4">参数</div><svg width="24" height="24" viewBox="-12.0 -12.0 24 24" style="left:336.5px;top:1511.4px"><g fill="#f2f2f2"><rect x="-2.5" y="-10.2" width="5" height="20.4" rx="1" transform="rotate(0)"/><rect x="-2.5" y="-10.2" width="5" height="20.4" rx="1" transform="rotate(45)"/><rect x="-2.5" y="-10.2" width="5" height="20.4" rx="1" transform="rotate(90)"/><rect x="-2.5" y="-10.2" width="5" height="20.4" rx="1" transform="rotate(135)"/><circle r="6.8"/></g><circle r="3" fill="#3c4554"/></svg><svg width="84" height="84" viewBox="-42.0 -42.0 84 84" style="left:10.0px;top:1544.0px"><path d="M-29 -33V25" stroke="#e5746c" stroke-width="2.4"/><path d="M-24 28.7H32" stroke="#dcdcdc" stroke-width="2.4"/><rect x="-32.5" y="25.5" width="7" height="7" fill="#e5746c"/><path d="M42 41V33L34 41Z" fill="#8b9099"/></svg><svg width="44" height="44" viewBox="-22.0 -22.0 44 44" style="left:96.0px;top:1541.6px"><rect x="-16" y="-1" width="13" height="9.5" fill="#dcdcdc"/><rect x="-3.6" y="-16" width="2.2" height="24.5" fill="#e5746c"/><rect x="-1.4" y="-16" width="12" height="10" fill="#8cc4fa"/><path transform="translate(8 7.5) scale(0.95)" d="M3 -9L-5 1.5H-0.5L-3 9L6 -2.5H1Z" fill="#f2c865"/></svg><svg width="44" height="44" viewBox="-22.0 -22.0 44 44" style="left:140.0px;top:1541.6px"><path d="M-11 -15H-15V11H-11M7 -15H11V-7" fill="none" stroke="#fff" stroke-width="2"/><path d="M-9 -5L2 5" stroke="#e0647a" stroke-width="2.4"/><path d="M-3 -1L5 -9" stroke="#d0c4cc" stroke-width="2.2"/><circle cx="10" cy="3.5" r="5.6" fill="#f2c865"/><path d="M7.4 9.7H12.6V12.0A2.6 2 0 0 1 7.4 12.0Z" fill="#fff"/></svg><svg width="44" height="44" viewBox="-22.0 -22.0 44 44" style="left:96.0px;top:1585.8px"><path d="M-11 -15H-15V11H-11M7 -15H11V-7" fill="none" stroke="#fff" stroke-width="2"/><path d="M-9 -5L2 5" stroke="#e0647a" stroke-width="2.4"/><path d="M-3 -1L5 -9" stroke="#d0c4cc" stroke-width="2.2"/><circle cx="10" cy="3.5" r="5.6" fill="#f2c865"/><path d="M10 -2.0999999999999996A5.6 5.6 0 0 1 10 9.1Z" fill="#7fd0de"/><path d="M10 -2.0999999999999996V9.1" stroke="#3c4454" stroke-width="1"/><path d="M7.4 9.7H12.6V12.0A2.6 2 0 0 1 7.4 12.0Z" fill="#fff"/></svg><svg width="44" height="44" viewBox="-22.0 -22.0 44 44" style="left:140.0px;top:1585.8px"><path d="M-11 -15H-15V11H-11M7 -15H11V-7" fill="none" stroke="#fff" stroke-width="2"/><path d="M-9 -5L2 5" stroke="#e0647a" stroke-width="2.4"/><path d="M-3 -1L5 -9" stroke="#d0c4cc" stroke-width="2.2"/><circle cx="10" cy="3.5" r="5.6" fill="#7fd0de"/><path d="M7.4 9.7H12.6V12.0A2.6 2 0 0 1 7.4 12.0Z" fill="#fff"/></svg><svg width="84" height="84" viewBox="-42.0 -42.0 84 84" style="left:185.5px;top:1544.0px"><path d="M-31 -32V32M31 -32V32" stroke="#dcdcdc" stroke-width="2.2"/><path d="M-22 -19H22" stroke="#dcdcdc" stroke-width="2.2"/><path d="M-29 -19L-21 -23.6V-14.4Z M29 -19L21 -23.6V-14.4Z" fill="#dcdcdc"/><path d="M-7 9V1A7 7.5 0 0 1 7 1V9" fill="none" stroke="#f2c865" stroke-width="4"/><rect x="-13" y="8.5" width="26" height="19.5" fill="#f2c865"/><rect x="-1" y="14" width="2" height="7.5" fill="#3c4454"/><path d="M42 41V33L34 41Z" fill="#8b9099"/></svg><svg width="44" height="44" viewBox="-22.0 -22.0 44 44" style="left:272.0px;top:1541.6px"><path d="M-15 -15V16M15 -15V16" stroke="#dcdcdc" stroke-width="2.2"/><path d="M-9.5 -8.5H9.5" stroke="#dcdcdc" stroke-width="1.8"/><path d="M-13 -8.5L-8.5 -11.3V-5.7Z M13 -8.5L8.5 -11.3V-5.7Z" fill="#dcdcdc"/><path d="M-3.5 -2.5A6.5 6.5 0 0 0 -2 9" fill="none" stroke="#6db0ee" stroke-width="2.4"/><path d="M-6.5 -0.5L-1.5 -6L0.5 0Z" fill="#6db0ee"/><path d="M3.5 9.5A6.5 6.5 0 0 0 2 -2" fill="none" stroke="#ea5f62" stroke-width="2.4"/><path d="M6.5 7.5L1.5 13L-0.5 7Z" fill="#ea5f62"/></svg><svg width="44" height="44" viewBox="-22.0 -22.0 44 44" style="left:316.0px;top:1541.6px"><path d="M-15 -15V16M11 -15V-3" stroke="#dcdcdc" stroke-width="2.2"/><path d="M-9.5 -8.5H6.0" stroke="#dcdcdc" stroke-width="1.8"/><path d="M-13 -8.5L-8.5 -11.3V-5.7Z M9.5 -8.5L5.0 -11.3V-5.7Z" fill="#dcdcdc"/><circle cx="10" cy="5.5" r="5.6" fill="#f2c865"/><path d="M7.4 11.7H12.6V14.0A2.6 2 0 0 1 7.4 14.0Z" fill="#fff"/></svg><svg width="44" height="44" viewBox="-22.0 -22.0 44 44" style="left:272.0px;top:1585.8px"><path d="M-15 -15V16M11 -15V-3" stroke="#dcdcdc" stroke-width="2.2"/><path d="M-9.5 -8.5H6.0" stroke="#dcdcdc" stroke-width="1.8"/><path d="M-13 -8.5L-8.5 -11.3V-5.7Z M9.5 -8.5L5.0 -11.3V-5.7Z" fill="#dcdcdc"/><circle cx="10" cy="5.5" r="5.6" fill="#f2c865"/><path d="M10 -0.09999999999999964A5.6 5.6 0 0 1 10 11.1Z" fill="#7fd0de"/><path d="M10 -0.09999999999999964V11.1" stroke="#3c4454" stroke-width="1"/><path d="M7.4 11.7H12.6V14.0A2.6 2 0 0 1 7.4 14.0Z" fill="#fff"/></svg><svg width="44" height="44" viewBox="-22.0 -22.0 44 44" style="left:316.0px;top:1585.8px"><path d="M-15 -15V16M11 -15V-3" stroke="#dcdcdc" stroke-width="2.2"/><path d="M-9.5 -8.5H6.0" stroke="#dcdcdc" stroke-width="1.8"/><path d="M-13 -8.5L-8.5 -11.3V-5.7Z M9.5 -8.5L5.0 -11.3V-5.7Z" fill="#dcdcdc"/><circle cx="10" cy="5.5" r="5.6" fill="#7fd0de"/><path d="M7.4 11.7H12.6V14.0A2.6 2 0 0 1 7.4 14.0Z" fill="#fff"/></svg><div class="abs" style="left:8px;top:1641.8px;width:352px;height:2.5px;background:#272d38"></div><svg width="24" height="24" viewBox="0 0 24 24" style="left:30px;top:1700px"><path d="M12 0V24M0 12H24" stroke="#dcdcdc" stroke-width="2.2"/></svg><svg width="30" height="24" viewBox="0 0 30 24" style="left:87px;top:1701px"><path d="M5 2H27M5 7.5H27M5 18.5H27" stroke="#dcdcdc" stroke-width="2.2"/><rect x="0" y="11" width="20" height="4.5" fill="#dcdcdc"/><path d="M21 15.5H27L24 11.5Z" fill="#dcdcdc"/></svg>
<div class="abs" style="left:2552px;top:160px;width:472px;height:1528px;background:#3c4554"></div>
<div class="abs" style="left:2655px;top:158px;width:369px;height:49px;background:#262b35"></div>
<div class="abs" style="left:2657px;top:160px;width:102.5px;height:45px;background:#2f3542"></div>
<div class="abs" style="left:2761.5px;top:160px;width:103.0px;height:45px;background:#2f3542"></div>
<div class="abs" style="left:2866.5px;top:160px;width:107.5px;height:45px;background:#2f3542"></div>
<div class="abs" style="left:2976px;top:160px;width:48px;height:45px;background:#394150"></div>
<svg width="18" height="14" viewBox="0 0 18 14" style="left:2991px;top:175px"><path d="M3 1L8 7L3 13M11 1L16 7L11 13" fill="none" stroke="#b4b7bd" stroke-width="1.8"/></svg>
<svg width="40" height="36" viewBox="-20.0 -18.0 40 36" style="left:2584.0px;top:164.0px"><path d="M-7.8 -2.0H12.2L3.8 7.5H-16.2Z" fill="#dcdcdc" stroke="#3c4554" stroke-width="1.3"/><path d="M-7.8 -8.2H12.2L3.8 1.2H-16.2Z" fill="#dcdcdc" stroke="#3c4554" stroke-width="1.3"/><path d="M-7.8 -14.4H12.2L3.8 -4.9H-16.2Z" fill="#dcdcdc" stroke="#3c4554" stroke-width="1.3"/><circle cx="9" cy="8" r="7.2" fill="#fff" stroke="#3c4454" stroke-width="1.6"/><rect x="8" y="6.5" width="2.2" height="5.5" fill="#3c4454"/><rect x="8" y="3.2" width="2.2" height="2.2" fill="#3c4454"/></svg>
<svg width="40" height="36" viewBox="-20.0 -18.0 40 36" style="left:2690.0px;top:163.0px"><path d="M-14 -3H8L16 5V13H-14Z" fill="#dcdcdc"/><path d="M8 -3V5H16Z" fill="#f6f6f6"/><path d="M-7 3V-8A3 3 0 0 0 -13 -8V2.5A4.6 4.6 0 0 0 -3.8 2.5V-9" fill="none" stroke="#3c4454" stroke-width="4.4"/><path d="M-7 3V-8A3 3 0 0 0 -13 -8V2.5A4.6 4.6 0 0 0 -3.8 2.5V-9" fill="none" stroke="#f6f6f6" stroke-width="2"/></svg>
<svg width="40" height="36" viewBox="-20.0 -18.0 40 36" style="left:2794.5px;top:164.0px"><rect x="-13.5" y="-13" width="27" height="26" fill="#dcdcdc"/><rect x="-13.5" y="-13" width="27" height="4.5" fill="#9a9da3"/><rect x="-11" y="-12" width="4" height="2.2" fill="#3c4454"/><rect x="-10" y="-5.5" width="5.5" height="5" fill="#3c4454"/><rect x="-2.5" y="-5.5" width="5.5" height="5" fill="#7b7f88"/><rect x="5" y="-5.5" width="5.5" height="5" fill="#7b7f88"/><rect x="-10" y="2" width="5.5" height="5" fill="#3c4454"/><rect x="-2.5" y="2" width="5.5" height="5" fill="#7b7f88"/><rect x="5" y="2" width="5.5" height="5" fill="#7b7f88"/><rect x="-10" y="9" width="20" height="2" fill="#9a9da3"/></svg>
<div class="t" style="left:2572.5px;top:210.3px;font-size:23px;color:#fff;font-weight:500;">图层</div>
<svg width="30" height="30" viewBox="-15.0 -15.0 30 30" style="left:2970.5px;top:205.0px"><rect x="-4" y="-12" width="16" height="24" fill="none" stroke="#dcdcdc" stroke-width="2"/><path d="M4.5 -12V12" stroke="#dcdcdc" stroke-width="2"/><path d="M-8 0H3" stroke="#7ab9f5" stroke-width="2.4"/><path d="M-13 0L-7 -4.5V4.5Z" fill="#7ab9f5"/></svg>
<svg width="40" height="40" viewBox="-20.0 -20.0 40 40" style="left:2575.8px;top:267.0px"><path d="M-5.8 5.4H14.2L5.8 14.9H-14.2Z" fill="#dcdcdc" stroke="#3c4554" stroke-width="1.3"/><path d="M-5.8 -0.8H14.2L5.8 8.8H-14.2Z" fill="#dcdcdc" stroke="#3c4554" stroke-width="1.3"/><path d="M-5.8 -7.0H14.2L5.8 2.5H-14.2Z" fill="#7ab9f5" stroke="#3c4554" stroke-width="1.3"/><circle cx="0" cy="-9" r="6" fill="#dcdcdc"/></svg>
<svg width="40" height="40" viewBox="-20.0 -20.0 40 40" style="left:2623.6px;top:267.0px"><path d="M-8.8 -2.5H11.2L2.8 7.0H-17.2Z" fill="#dcdcdc" stroke="#3c4554" stroke-width="1.3"/><path d="M-8.8 -8.8H11.2L2.8 0.8H-17.2Z" fill="#dcdcdc" stroke="#3c4554" stroke-width="1.3"/><path d="M-8.8 -14.9H11.2L2.8 -5.4H-17.2Z" fill="#dcdcdc" stroke="#3c4554" stroke-width="1.3"/><g transform="translate(9 9) rotate(-45)"><rect x="-6.5" y="-1" width="13" height="7.5" fill="#f2c865" stroke="#3c4454" stroke-width="1.2"/><rect x="-7" y="-5" width="14" height="4.5" fill="#fff" stroke="#3c4454" stroke-width="1"/><rect x="-2" y="-9.5" width="4" height="5" fill="#fff"/></g></svg>
<svg width="40" height="40" viewBox="-20.0 -20.0 40 40" style="left:2672.7px;top:267.0px"><path d="M-3.8 6.4H16.2L7.8 15.9H-12.2Z" fill="#dcdcdc" stroke="#3c4554" stroke-width="1.3"/><path d="M-3.8 0.2H16.2L7.8 9.8H-12.2Z" fill="#dcdcdc" stroke="#3c4554" stroke-width="1.3"/><path d="M-3.8 -6.0H16.2L7.8 3.5H-12.2Z" fill="#dcdcdc" stroke="#3c4554" stroke-width="1.3"/><path d="M-6 -9C2 -10 6 -7 8 -2" fill="none" stroke="#7ab9f5" stroke-width="3.4"/><path d="M-13.5 -8.5L-5 -15V-3Z" fill="#7ab9f5"/></svg>
<svg width="40" height="40" viewBox="-20.0 -20.0 40 40" style="left:2719.8px;top:267.0px"><path d="M-8.8 -2.5H11.2L2.8 7.0H-17.2Z" fill="#7ab9f5" stroke="#3c4554" stroke-width="1.3"/><path d="M-8.8 -8.8H11.2L2.8 0.8H-17.2Z" fill="#dcdcdc" stroke="#3c4554" stroke-width="1.3"/><path d="M-8.8 -14.9H11.2L2.8 -5.4H-17.2Z" fill="#dcdcdc" stroke="#3c4554" stroke-width="1.3"/><path d="M13 4L3 14" stroke="#fff" stroke-width="2.4"/><path d="M1 16L2.5 7.5L9.5 14.5Z" fill="#fff"/></svg>
<svg width="40" height="40" viewBox="-20.0 -20.0 40 40" style="left:2767.7px;top:267.0px"><path d="M-8.8 -2.5H11.2L2.8 7.0H-17.2Z" fill="#7ab9f5" stroke="#3c4554" stroke-width="1.3"/><path d="M-8.8 -8.8H11.2L2.8 0.8H-17.2Z" fill="#dcdcdc" stroke="#3c4554" stroke-width="1.3"/><path d="M-8.8 -14.9H11.2L2.8 -5.4H-17.2Z" fill="#dcdcdc" stroke="#3c4554" stroke-width="1.3"/><path d="M2 15L12 5" stroke="#fff" stroke-width="2.4"/><path d="M14 3L12.5 11.5L5.5 4.5Z" fill="#fff"/></svg>
<svg width="40" height="40" viewBox="-20.0 -20.0 40 40" style="left:2818.0px;top:267.0px"><path d="M-9.8 -13.2H10.2L1.8 -3.8H-18.2Z" fill="#dcdcdc"/><path d="M-2.0 5.5L14.0 5.5M2.0 -1.4L10.0 12.4M10.0 -1.4L2.0 12.4" stroke="#7fd0de" stroke-width="2" fill="none"/><circle cx="6" cy="5.5" r="4.4" fill="none" stroke="#7fd0de" stroke-width="1.6"/></svg>
<svg width="40" height="40" viewBox="-20.0 -20.0 40 40" style="left:2866.0px;top:267.0px"><path d="M-9.8 -13.2H10.2L1.8 -3.8H-18.2Z" fill="#dcdcdc"/><circle cx="8" cy="3" r="5.8" fill="#7fd0de"/><path d="M5.2 9.5H10.8V11.5A2.8 2.2 0 0 1 5.2 11.5Z" fill="#fff"/></svg>
<svg width="40" height="40" viewBox="-20.0 -20.0 40 40" style="left:2914.0px;top:267.0px"><path d="M-9.8 -13.2H10.2L1.8 -3.8H-18.2Z" fill="#dcdcdc"/><g transform="translate(7 4) scale(1.15)"><path d="M-3.4 0V-3.5A3.4 3.6 0 0 1 3.4 -3.5V0" fill="none" stroke="#7fd0de" stroke-width="2.2"/><rect x="-5.5" y="0" width="11" height="8.5" fill="#7fd0de"/><rect x="-0.8" y="2.5" width="1.6" height="3.6" fill="#3c4454"/></g></svg>
<svg width="40" height="40" viewBox="-20.0 -20.0 40 40" style="left:2962.4px;top:267.0px"><path d="M-9.8 -13.2H10.2L1.8 -3.8H-18.2Z" fill="#dcdcdc"/><g transform="translate(5 4) scale(1.15)"><path d="M-1 0V-4.5A3.4 3.6 0 0 1 5.8 -4.5V-2.5" fill="none" stroke="#f2c865" stroke-width="2.2"/><rect x="-5.5" y="0" width="11" height="8.5" fill="#f2c865"/><rect x="-0.8" y="2.5" width="1.6" height="3.6" fill="#3c4454"/></g></svg>
<div class="abs" style="left:2571.0px;top:325.5px;width:438.5px;height:51px;background:#2b313c;border-radius:5px"></div><div class="abs" style="left:2572.5px;top:327.0px;width:435.5px;height:48px;background:#4e596e;border-radius:4px"></div>
<svg width="20" height="20" viewBox="-10.0 -10.0 20 20" style="left:2590.0px;top:341.0px"><circle r="8" fill="#dcdcdc"/></svg>
<svg width="20" height="24" viewBox="-10.0 -12.0 20 24" style="left:2624.0px;top:339.0px"><g transform="translate(0 0) scale(1.2)"><path d="M-3.4 0V-3.5A3.4 3.6 0 0 1 3.4 -3.5V0" fill="none" stroke="#6a7386" stroke-width="2.2"/><rect x="-5.5" y="0" width="11" height="8.5" fill="#6a7386"/><rect x="-0.8" y="2.5" width="1.6" height="3.6" fill="#3c4454"/></g></svg>
<svg width="20" height="20" viewBox="-10.0 -10.0 20 20" style="left:2658.0px;top:341.0px"><path d="M-8.0 0.0L8.0 0.0M-4.0 -6.9L4.0 6.9M4.0 -6.9L-4.0 6.9" stroke="#6a7386" stroke-width="2" fill="none"/><circle cx="0" cy="0" r="4.4" fill="none" stroke="#6a7386" stroke-width="1.6"/></svg>
<div class="abs" style="left:2692.5px;top:342.5px;width:17.5px;height:17.5px;background:#fff;border:2px solid #000"></div>
<div class="t" style="left:2734.0px;top:339.8px;font-size:23px;color:#fff;font-weight:normal;">0</div>
<svg width="14" height="10" viewBox="0 0 14 10" style="left:2987.0px;top:345.5px"><path d="M0 0H13L6.5 9Z" fill="#c9ccd2"/></svg>
<div class="abs" style="left:2572.5px;top:381.5px;width:435.5px;height:51px;background:#2b313c;border-radius:5px"></div><div class="abs" style="left:2574.0px;top:383.0px;width:432.5px;height:48px;background:#4e596e;border-radius:4px"></div>
<div class="t" style="left:2586.0px;top:396.5px;font-size:21.6px;color:#fff;font-weight:500;">未保存的图层状态</div>
<svg width="14" height="10" viewBox="0 0 14 10" style="left:2985.0px;top:401.5px"><path d="M0 0H13L6.5 9Z" fill="#c9ccd2"/></svg>
<svg width="12" height="20" viewBox="0 0 12 20" style="left:2585px;top:448.5px"><path d="M2 2L9.5 10L2 18" fill="none" stroke="#c9ccd2" stroke-width="2.4"/></svg>
<div class="t" style="left:2621.0px;top:448.1px;font-size:21.5px;color:#c9ccd2;font-weight:normal;">显示图层列表</div>
<div class="abs" style="left:2552px;top:504px;width:472px;height:2.5px;background:#272d38"></div>
<div class="t" style="left:2572.5px;top:510.3px;font-size:23px;color:#fff;font-weight:500;">特性</div>
<div class="abs" style="left:2791.5px;top:507.5px;width:121px;height:28px;background:#262c37;border-radius:3px"></div>
<div class="abs" style="left:2793.5px;top:509.5px;width:55px;height:24px;background:#394150"></div>
<div class="abs" style="left:2850px;top:509.5px;width:60.5px;height:24px;background:#4e596e"></div>
<div class="t" style="left:2805.5px;top:514.0px;font-size:15.5px;color:#8d93a0;font-weight:normal;">全部</div>
<div class="t" style="left:2865.0px;top:514.0px;font-size:15.5px;color:#fff;font-weight:bold;">我的</div>
<svg width="32" height="32" viewBox="-16.0 -16.0 32 32" style="left:2930.0px;top:505.0px"><path d="M-11 -11H5V-2M-11 -11V9H-3" fill="none" stroke="#dcdcdc" stroke-width="2.2"/><path d="M-7 -6H1M-7 -1.5H1M-7 3H-3" stroke="#dcdcdc" stroke-width="2"/><path d="M0 13L1.5 7L9 -0.5L13.5 4L6 11.5Z" fill="#dcdcdc"/><path d="M0 13L1.5 7L6 11.5Z" fill="#3c4454"/></svg>
<svg width="30" height="30" viewBox="-15.0 -15.0 30 30" style="left:2973.5px;top:506.0px"><rect x="-4" y="-12" width="16" height="24" fill="none" stroke="#dcdcdc" stroke-width="2"/><path d="M4.5 -12V12" stroke="#dcdcdc" stroke-width="2"/><path d="M-8 0H3" stroke="#7ab9f5" stroke-width="2.4"/><path d="M-13 0L-7 -4.5V4.5Z" fill="#7ab9f5"/></svg>
<div class="abs" style="left:2572.5px;top:553.0px;width:431.0px;height:42.5px;background:#363d4b;border-radius:5px"></div><div class="abs" style="left:2574.0px;top:554.5px;width:428.0px;height:39.5px;background:#434c5e;border-radius:4px"></div>
<div class="t" style="left:2586.0px;top:564.1px;font-size:21.5px;color:#7f8796;font-weight:normal;">模型空间</div>
<svg width="14" height="10" viewBox="0 0 14 10" style="left:2981.0px;top:569.5px"><path d="M0 0H13L6.5 9Z" fill="#6f7786"/></svg>
<div class="abs" style="left:2572.5px;top:605.5px;width:430px;height:43.5px;border:1.5px solid #464f60;border-radius:3px"></div>
<div class="t" style="right:264.0px;top:616.6px;font-size:21.5px;color:#d6d9de;font-weight:500">颜色</div>
<div class="abs" style="left:2781.0px;top:608.5px;width:216.0px;height:37px;background:#2b313c;border-radius:5px"></div><div class="abs" style="left:2782.5px;top:610.0px;width:213.0px;height:34px;background:#4e596e;border-radius:4px"></div>
<div class="abs" style="left:2800.5px;top:618.2px;width:17.6px;height:17.6px;background:#fff;border:2px solid #000"></div>
<div class="t" style="left:2838.0px;top:615.9px;font-size:22.8px;color:#fff;font-weight:normal;">ByLayer</div>
<svg width="14" height="10" viewBox="0 0 14 10" style="left:2975.0px;top:622.5px"><path d="M0 0H13L6.5 9Z" fill="#c9ccd2"/></svg>
<div class="t" style="right:264.0px;top:662.6px;font-size:21.5px;color:#d6d9de;font-weight:500">图层</div>
<div class="abs" style="left:2781.0px;top:654.5px;width:216.0px;height:37px;background:#2b313c;border-radius:5px"></div><div class="abs" style="left:2782.5px;top:656.0px;width:213.0px;height:34px;background:#4e596e;border-radius:4px"></div>
<div class="t" style="left:2794.5px;top:661.9px;font-size:22.8px;color:#fff;font-weight:normal;">0</div>
<svg width="14" height="10" viewBox="0 0 14 10" style="left:2975.0px;top:668.5px"><path d="M0 0H13L6.5 9Z" fill="#c9ccd2"/></svg>
<div class="t" style="right:264.0px;top:708.6px;font-size:21.5px;color:#d6d9de;font-weight:500">线型</div>
<div class="abs" style="left:2781.0px;top:700.5px;width:216.0px;height:37px;background:#2b313c;border-radius:5px"></div><div class="abs" style="left:2782.5px;top:702.0px;width:213.0px;height:34px;background:#4e596e;border-radius:4px"></div>
<div class="abs" style="left:2797px;top:718px;width:64px;height:2px;background:#fff"></div>
<div class="t" style="left:2888.5px;top:707.9px;font-size:22.8px;color:#fff;font-weight:normal;">ByLa...</div>
<svg width="14" height="10" viewBox="0 0 14 10" style="left:2975.0px;top:714.5px"><path d="M0 0H13L6.5 9Z" fill="#c9ccd2"/></svg>
<div class="t" style="right:264.0px;top:754.6px;font-size:21.5px;color:#d6d9de;font-weight:500">线型比例</div>
<div class="abs" style="left:2781.0px;top:746.5px;width:216.0px;height:37px;background:#2b313c;border-radius:3px"></div><div class="abs" style="left:2782.5px;top:748.0px;width:213.0px;height:34px;background:#4e596e;border-radius:2px"></div>
<div class="t" style="left:2789.0px;top:754.9px;font-size:22.8px;color:#fff;font-weight:normal;">1</div>
<div class="t" style="right:264.0px;top:800.6px;font-size:21.5px;color:#d6d9de;font-weight:500">线宽</div>
<div class="abs" style="left:2781.0px;top:792.5px;width:216.0px;height:37px;background:#2b313c;border-radius:5px"></div><div class="abs" style="left:2782.5px;top:794.0px;width:213.0px;height:34px;background:#4e596e;border-radius:4px"></div>
<div class="t" style="left:2794.5px;top:799.9px;font-size:22.8px;color:#fff;font-weight:normal;">ByLayer</div>
<svg width="14" height="10" viewBox="0 0 14 10" style="left:2975.0px;top:806.5px"><path d="M0 0H13L6.5 9Z" fill="#c9ccd2"/></svg>
<div class="t" style="right:264.0px;top:846.6px;font-size:21.5px;color:#d6d9de;font-weight:500">透明度</div>
<div class="abs" style="left:2785.0px;top:840.5px;width:127.0px;height:33px;background:#2b313c;border-radius:3px"></div><div class="abs" style="left:2786.5px;top:842.0px;width:124.0px;height:30px;background:#4e596e;border-radius:2px"></div>
<div class="abs" style="left:2786.5px;top:843px;width:2.5px;height:5px;background:#6f9be6"></div><div class="abs" style="left:2786.5px;top:862px;width:2.5px;height:8px;background:#6f9be6"></div>
<div class="abs" style="left:2846px;top:858px;width:1.5px;height:11px;background:#717a8c"></div>
<div class="t" style="right:118.5px;top:844.5px;font-size:22.8px;color:#fff">0</div>
<div class="abs" style="left:2919.0px;top:838.5px;width:78.0px;height:37px;background:#2b313c;border-radius:5px"></div><div class="abs" style="left:2920.5px;top:840.0px;width:75.0px;height:34px;background:#4e596e;border-radius:4px"></div>
<svg width="30" height="24" viewBox="-15.0 -12.0 30 24" style="left:2930.0px;top:845.0px"><path d="M-5.0 1.1H11.0L5.0 8.1H-11.0Z" fill="#dcdcdc" stroke="#3c4554" stroke-width="1.3"/><path d="M-5.0 -3.5H11.0L5.0 3.5H-11.0Z" fill="#dcdcdc" stroke="#3c4554" stroke-width="1.3"/><path d="M-5.0 -8.1H11.0L5.0 -1.1H-11.0Z" fill="#7ab9f5" stroke="#3c4554" stroke-width="1.3"/></svg>
<svg width="14" height="10" viewBox="0 0 14 10" style="left:2973.0px;top:851.5px"><path d="M0 0H13L6.5 9Z" fill="#c9ccd2"/></svg>
<div class="t" style="right:264.0px;top:892.6px;font-size:21.5px;color:#d6d9de;font-weight:500">文字样式</div>
<div class="abs" style="left:2781.0px;top:884.5px;width:216.0px;height:37px;background:#2b313c;border-radius:5px"></div><div class="abs" style="left:2782.5px;top:886.0px;width:213.0px;height:34px;background:#4e596e;border-radius:4px"></div>
<div class="t" style="left:2794.5px;top:891.9px;font-size:22.8px;color:#fff;font-weight:normal;">Standard</div>
<svg width="14" height="10" viewBox="0 0 14 10" style="left:2975.0px;top:898.5px"><path d="M0 0H13L6.5 9Z" fill="#c9ccd2"/></svg>
<div class="t" style="right:264.0px;top:938.6px;font-size:21.5px;color:#d6d9de;font-weight:500">标注样式</div>
<div class="abs" style="left:2781.0px;top:930.5px;width:216.0px;height:37px;background:#2b313c;border-radius:5px"></div><div class="abs" style="left:2782.5px;top:932.0px;width:213.0px;height:34px;background:#4e596e;border-radius:4px"></div>
<div class="t" style="left:2794.5px;top:937.9px;font-size:22.8px;color:#fff;font-weight:normal;">ISO-25</div>
<svg width="14" height="10" viewBox="0 0 14 10" style="left:2975.0px;top:944.5px"><path d="M0 0H13L6.5 9Z" fill="#c9ccd2"/></svg>
<div class="t" style="right:264.0px;top:984.6px;font-size:21.5px;color:#d6d9de;font-weight:500">多重引线样式</div>
<div class="abs" style="left:2781.0px;top:976.5px;width:216.0px;height:37px;background:#2b313c;border-radius:5px"></div><div class="abs" style="left:2782.5px;top:978.0px;width:213.0px;height:34px;background:#4e596e;border-radius:4px"></div>
<div class="t" style="left:2794.5px;top:983.9px;font-size:22.8px;color:#fff;font-weight:normal;">Standard</div>
<svg width="14" height="10" viewBox="0 0 14 10" style="left:2975.0px;top:990.5px"><path d="M0 0H13L6.5 9Z" fill="#c9ccd2"/></svg>
<div class="t" style="right:264.0px;top:1030.6px;font-size:21.5px;color:#d6d9de;font-weight:500">表格样式</div>
<div class="abs" style="left:2781.0px;top:1022.5px;width:216.0px;height:37px;background:#2b313c;border-radius:5px"></div><div class="abs" style="left:2782.5px;top:1024.0px;width:213.0px;height:34px;background:#4e596e;border-radius:4px"></div>
<div class="t" style="left:2794.5px;top:1029.9px;font-size:22.8px;color:#fff;font-weight:normal;">Standard</div>
<svg width="14" height="10" viewBox="0 0 14 10" style="left:2975.0px;top:1036.5px"><path d="M0 0H13L6.5 9Z" fill="#c9ccd2"/></svg>
<div class="t" style="right:264.0px;top:1076.6px;font-size:21.5px;color:#d6d9de;font-weight:500">注释比例</div>
<div class="abs" style="left:2781.0px;top:1068.5px;width:216.0px;height:37px;background:#2b313c;border-radius:5px"></div><div class="abs" style="left:2782.5px;top:1070.0px;width:213.0px;height:34px;background:#4e596e;border-radius:4px"></div>
<div class="t" style="left:2794.5px;top:1075.9px;font-size:22.8px;color:#fff;font-weight:normal;">1:1</div>
<svg width="14" height="10" viewBox="0 0 14 10" style="left:2975.0px;top:1082.5px"><path d="M0 0H13L6.5 9Z" fill="#c9ccd2"/></svg>
<div class="t" style="right:264.0px;top:1122.6px;font-size:21.5px;color:#d6d9de;font-weight:500">文字高度</div>
<div class="abs" style="left:2781.0px;top:1114.5px;width:171.0px;height:37px;background:#2b313c;border-radius:3px"></div><div class="abs" style="left:2782.5px;top:1116.0px;width:168.0px;height:34px;background:#4e596e;border-radius:2px"></div>
<div class="t" style="left:2789.0px;top:1122.9px;font-size:22.8px;color:#fff;font-weight:normal;">2.5</div>
<div class="abs" style="left:2957.0px;top:1114.5px;width:40.0px;height:37px;background:#363d4b;border-radius:4px"></div><div class="abs" style="left:2958.5px;top:1116.0px;width:37.0px;height:34px;background:#434c5e;border-radius:3px"></div>
<svg width="36" height="34" viewBox="-18.0 -17.0 36 34" style="left:2959.0px;top:1116.0px"><path d="M-14.5 -15V12M13.5 -15V-4" stroke="#dcdcdc" stroke-width="1.8"/><path d="M-8 -9.5H8" stroke="#7ab9f5" stroke-width="1.8"/><path d="M-11.5 -9.5L-7 -12.5V-6.5Z M11.5 -9.5L7 -12.5V-6.5Z" fill="#7ab9f5"/><path d="M7 0V16M-1 8H15" stroke="#fff" stroke-width="2"/><rect x="3.5" y="4.5" width="7" height="7" fill="none" stroke="#fff" stroke-width="1.6"/></svg>
<div class="t" style="right:264.0px;top:1168.6px;font-size:21.5px;color:#d6d9de;font-weight:500">打印样式</div>
<div class="abs" style="left:2781.0px;top:1160.5px;width:216.0px;height:37px;background:#2b313c;border-radius:5px"></div><div class="abs" style="left:2782.5px;top:1162.0px;width:213.0px;height:34px;background:#4e596e;border-radius:4px"></div>
<div class="t" style="left:2794.5px;top:1167.9px;font-size:22.8px;color:#fff;font-weight:normal;">ByColor</div>
<svg width="14" height="10" viewBox="0 0 14 10" style="left:2975.0px;top:1174.5px"><path d="M0 0H13L6.5 9Z" fill="#c9ccd2"/></svg>
<div class="t" style="right:264.0px;top:1214.6px;font-size:21.5px;color:#d6d9de;font-weight:500">打印样式表</div>
<div class="abs" style="left:2781.0px;top:1206.5px;width:216.0px;height:37px;background:#2b313c;border-radius:5px"></div><div class="abs" style="left:2782.5px;top:1208.0px;width:213.0px;height:34px;background:#4e596e;border-radius:4px"></div>
<div class="t" style="left:2794.5px;top:1213.9px;font-size:22.8px;color:#fff;font-weight:500;">无</div>
<svg width="14" height="10" viewBox="0 0 14 10" style="left:2975.0px;top:1220.5px"><path d="M0 0H13L6.5 9Z" fill="#c9ccd2"/></svg>
<div class="t" style="right:254.5px;top:1260.6px;font-size:21.5px;color:#d6d9de;font-weight:500">打印样式附着到</div>
<div class="abs" style="left:2781.0px;top:1253.0px;width:216.0px;height:36px;background:#394050;border-radius:3px"></div><div class="abs" style="left:2782.5px;top:1254.5px;width:213.0px;height:33px;background:#434c5e;border-radius:2px"></div>
<div class="t" style="left:2789.0px;top:1262.1px;font-size:21.5px;color:#7f8796;font-weight:normal;">模型</div>
<div class="t" style="right:264.0px;top:1306.6px;font-size:21.5px;color:#d6d9de;font-weight:500">打印表类型</div>
<div class="abs" style="left:2781.0px;top:1299.0px;width:216.0px;height:36px;background:#394050;border-radius:3px"></div><div class="abs" style="left:2782.5px;top:1300.5px;width:213.0px;height:33px;background:#434c5e;border-radius:2px"></div>
<div class="t" style="left:2789.0px;top:1308.1px;font-size:21.5px;color:#7f8796;font-weight:normal;">不可用</div>
<div class="abs" style="left:368px;top:1686.5px;width:2656px;height:47.5px;background:#272d38"></div>
<div class="abs" style="left:368px;top:1688.0px;width:2656px;height:46px;background:#3c4555"></div>
<div class="abs" style="left:368px;top:1688.0px;width:122px;height:46px;background:#272d38"></div>
<div class="abs" style="left:370px;top:1688.0px;width:118px;height:44px;background:#4e5a70"></div>
<div class="abs" style="left:488px;top:1688.0px;width:48.5px;height:46px;background:#272d38"></div>
<div class="abs" style="left:490px;top:1688.0px;width:44.5px;height:44px;background:#3a4252"></div>
<div class="abs" style="left:534.5px;top:1688.0px;width:119.5px;height:46px;background:#272d38"></div>
<div class="abs" style="left:536.5px;top:1688.0px;width:115.5px;height:44px;background:#3a4252"></div>
<div class="abs" style="left:652px;top:1688.0px;width:120px;height:46px;background:#272d38"></div>
<div class="abs" style="left:654px;top:1688.0px;width:116px;height:44px;background:#3a4252"></div>
<div class="t" style="left:403.8px;top:1697.5px;font-size:22px;font-weight:bold;color:#fff">模型</div>
<svg width="24" height="24" viewBox="0 0 24 24" style="left:500px;top:1698px"><path d="M12 1V23M1 12H23" stroke="#e4e4e4" stroke-width="2.2"/></svg>
<div class="t" style="left:565.3px;top:1697px;font-size:21px;color:#b1b4ba">布局1</div>
<div class="t" style="left:682.2px;top:1697px;font-size:21px;color:#b1b4ba">布局2</div>
<div class="abs" style="left:1956.5px;top:1688.5px;width:2.5px;height:45px;background:#2b313d"></div>
<div class="t" style="left:1981px;top:1699.5px;font-size:22.7px;color:#b9bcc3">2590.6417, 1541.2136, 0.0000</div>
<div class="abs" style="left:2302.0px;top:1690px;width:40px;height:40px;background:#628cc8"></div>
<div class="abs" style="left:2477.9px;top:1690px;width:40px;height:40px;background:#628cc8"></div>
<div class="abs" style="left:2565.8px;top:1690px;width:40px;height:40px;background:#628cc8"></div>
<div class="abs" style="left:2609.8px;top:1690px;width:40px;height:40px;background:#628cc8"></div>
<div class="abs" style="left:2653.8px;top:1690px;width:40px;height:40px;background:#628cc8"></div>
<div class="abs" style="left:2697.7px;top:1690px;width:40px;height:40px;background:#628cc8"></div>
<div class="abs" style="left:2741.7px;top:1690px;width:40px;height:40px;background:#628cc8"></div>
<svg width="40" height="40" viewBox="-20.0 -20.0 40 40" style="left:2302.0px;top:1690.0px"><path d="M-8.5 -15V15M0 -15V15M8.5 -15V15M-15 -8.5H15M-15 0H15M-15 8.5H15" stroke="#fff" stroke-width="2.2"/></svg>
<svg width="40" height="40" viewBox="-20.0 -20.0 40 40" style="left:2346.0px;top:1690.0px"><rect x="-12" y="-12" width="4" height="4" fill="#e0e0e0"/><rect x="-12" y="-2" width="4" height="4" fill="#e0e0e0"/><rect x="-12" y="8" width="4" height="4" fill="#e0e0e0"/><rect x="-2" y="-12" width="4" height="4" fill="#e0e0e0"/><rect x="-2" y="-2" width="4" height="4" fill="#e0e0e0"/><rect x="-2" y="8" width="4" height="4" fill="#e0e0e0"/><rect x="8" y="-12" width="4" height="4" fill="#e0e0e0"/><rect x="8" y="-2" width="4" height="4" fill="#e0e0e0"/><rect x="8" y="8" width="4" height="4" fill="#e0e0e0"/></svg>
<svg width="40" height="40" viewBox="-20.0 -20.0 40 40" style="left:2389.9px;top:1690.0px"><path d="M-14 -16V15H16M-14 4H-3V15" fill="none" stroke="#e0e0e0" stroke-width="2.2"/></svg>
<svg width="40" height="40" viewBox="-20.0 -20.0 40 40" style="left:2433.9px;top:1690.0px"><circle cx="-3" cy="1" r="12.5" fill="none" stroke="#e0e0e0" stroke-width="2.2"/><path d="M10 -13L-3 1H15" fill="none" stroke="#e0e0e0" stroke-width="2.2"/></svg>
<svg width="40" height="40" viewBox="-20.0 -20.0 40 40" style="left:2477.9px;top:1690.0px"><path d="M-9 -13V0M-15.5 -6.5H-2.5" stroke="#fff" stroke-width="2.2"/><rect x="-3.5" y="3.5" width="20" height="8.5" fill="#fff"/><rect x="-1" y="5.5" width="2" height="4.5" fill="#628cc8"/></svg>
<svg width="40" height="40" viewBox="-20.0 -20.0 40 40" style="left:2521.8px;top:1690.0px"><path d="M-16 -13H16M-16 -5H16M-16 5H16" stroke="#e0e0e0" stroke-width="2"/><rect x="-16" y="-13" width="16" height="3.5" fill="#e0e0e0"/><rect x="-16" y="-5" width="16" height="5.5" fill="#e0e0e0"/><rect x="-16" y="5" width="16" height="7.5" fill="#e0e0e0"/></svg>
<svg width="40" height="40" viewBox="-20.0 -20.0 40 40" style="left:2565.8px;top:1690.0px"><rect x="-13" y="-13" width="26" height="26" fill="none" stroke="#fff" stroke-width="2.4"/><rect x="-10" y="-10" width="4" height="4" fill="#fff"/><rect x="-10" y="-2" width="4" height="4" fill="#fff"/><rect x="-10" y="6" width="4" height="4" fill="#fff"/><rect x="-6" y="-6" width="4" height="4" fill="#fff"/><rect x="-6" y="2" width="4" height="4" fill="#fff"/><rect x="-2" y="-10" width="4" height="4" fill="#fff"/><rect x="-2" y="-2" width="4" height="4" fill="#fff"/><rect x="-2" y="6" width="4" height="4" fill="#fff"/><rect x="2" y="-6" width="4" height="4" fill="#fff"/><rect x="2" y="2" width="4" height="4" fill="#fff"/><rect x="6" y="-10" width="4" height="4" fill="#fff"/><rect x="6" y="-2" width="4" height="4" fill="#fff"/><rect x="6" y="6" width="4" height="4" fill="#fff"/></svg>
<svg width="40" height="40" viewBox="-20.0 -20.0 40 40" style="left:2609.8px;top:1690.0px"><path d="M-9 -15H-14V11H-9M4 -15H9V-5" fill="none" stroke="#fff" stroke-width="2"/><rect x="-8" y="-10" width="9" height="6" fill="#8a93a8" stroke="#fff" stroke-width="1.8"/><circle cx="-3.5" cy="4" r="4.6" fill="#8a93a8" stroke="#fff" stroke-width="1.8"/><path d="M4 -1V15L8 11.5L11 18L14 16.5L11 10.5H16Z" fill="#fff" stroke="#628cc8" stroke-width="1"/></svg>
<svg width="40" height="40" viewBox="-20.0 -20.0 40 40" style="left:2653.8px;top:1690.0px"><path d="M9 -12L-14 12H16" fill="none" stroke="#fff" stroke-width="2.2"/><circle cx="-2.5" cy="0" r="2.6" fill="#fff"/></svg>
<svg width="40" height="40" viewBox="-20.0 -20.0 40 40" style="left:2697.7px;top:1690.0px"><path d="M-7 -10H13V15H-13V-4" fill="none" stroke="#fff" stroke-width="2.2"/><rect x="-17" y="-14" width="8" height="8" fill="#628cc8" stroke="#fff" stroke-width="2"/></svg>
<svg width="40" height="40" viewBox="-20.0 -20.0 40 40" style="left:2741.7px;top:1691.0px"><path transform="scale(1.0)" d="M0 -15L13 14L3.5 8.5L3 4A3 3 0 0 0 -3 4L-3.5 8.5L-13 14Z" fill="#fff"/><path transform="scale(1.0)" d="M0 -7L3 0H-3Z" fill="none"/><circle cx="9" cy="-11" r="4" fill="#fff"/></svg>
<svg width="40" height="40" viewBox="-20.0 -20.0 40 40" style="left:2784.7px;top:1691.0px"><path transform="scale(1.0)" d="M0 -15L13 14L3.5 8.5L3 4A3 3 0 0 0 -3 4L-3.5 8.5L-13 14Z" fill="#e0e0e0"/><path transform="scale(1.0)" d="M0 -7L3 0H-3Z" fill="none"/><path d="M14 -15L7 -6H10.5L8.5 0L15.5 -9H12Z" fill="#f2c865"/></svg>
<svg width="40" height="40" viewBox="-20.0 -20.0 40 40" style="left:2830.1px;top:1691.0px"><path transform="scale(1.0)" d="M0 -15L13 14L3.5 8.5L3 4A3 3 0 0 0 -3 4L-3.5 8.5L-13 14Z" fill="#e0e0e0"/><path transform="scale(1.0)" d="M0 -7L3 0H-3Z" fill="none"/></svg>
<div class="t" style="left:2874.6px;top:1702px;font-size:17px;color:#e0e0e0">1:1</div>
<svg width="20" height="20" viewBox="-10.0 -10.0 20 20" style="left:2896.6px;top:1699.0px"><path d="M-6 1L-2 5L7 -6" fill="none" stroke="#e0e0e0" stroke-width="2.4"/></svg>
<svg width="44" height="40" viewBox="-22.0 -20.0 44 40" style="left:2925.0px;top:1690.0px"><rect x="-13" y="-15" width="11" height="11" fill="none" stroke="#e0e0e0" stroke-width="2"/><circle cx="11" cy="-3" r="5.6" fill="none" stroke="#e0e0e0" stroke-width="2"/><path d="M-6 15L0.5 4L7 15Z" fill="none" stroke="#e0e0e0" stroke-width="2"/></svg>
<svg width="40" height="40" viewBox="-20.0 -20.0 40 40" style="left:2974.0px;top:1691.0px"><g fill="#e0e0e0"><rect x="-3.4" y="-14" width="6.8" height="28" transform="rotate(0)"/><rect x="-3.4" y="-14" width="6.8" height="28" transform="rotate(45)"/><rect x="-3.4" y="-14" width="6.8" height="28" transform="rotate(90)"/><rect x="-3.4" y="-14" width="6.8" height="28" transform="rotate(135)"/><circle r="10"/></g><circle r="4.6" fill="#3c4555"/></svg>
<div style="position:absolute;white-space:nowrap;line-height:1;color:#c6c8cc;opacity:.7;-webkit-text-stroke:.7px #c6c8cc;left:2727.5px;top:1686px;font-size:40px;font-family:'Liberation Mono',monospace">doooo</div>
<div style="position:absolute;white-space:nowrap;line-height:1;color:#c6c8cc;opacity:.7;-webkit-text-stroke:.7px #c6c8cc;left:2841px;top:1686px;font-size:40px;font-family:'Liberation Mono',monospace;letter-spacing:-1.5px">it@</div>
<div style="position:absolute;white-space:nowrap;line-height:1;color:#c6c8cc;opacity:.7;-webkit-text-stroke:.7px #c6c8cc;left:2907px;top:1682px;font-size:42px;font-family:'Liberation Serif','Noto Serif CJK SC',serif;letter-spacing:5px">小柒</div>
</div>
</body></html>
